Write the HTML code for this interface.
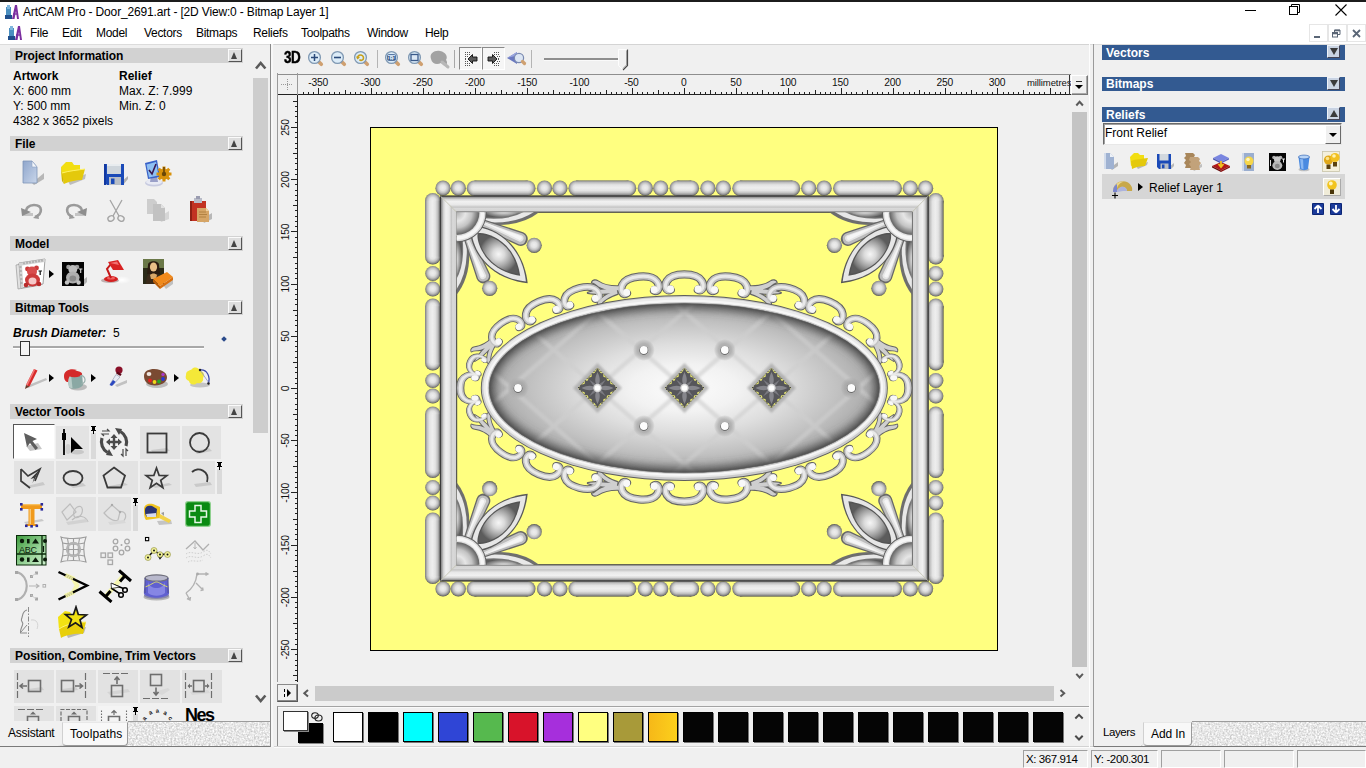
<!DOCTYPE html>
<html lang="en"><head><meta charset="utf-8"><title>ArtCAM Pro - Door_2691.art</title>
<style>
*{box-sizing:border-box;margin:0;padding:0}
html,body{width:1366px;height:768px;overflow:hidden;background:#f0f0f0;font-family:"Liberation Sans",sans-serif;font-size:12px;color:#000}
.a{position:absolute}
.t{position:absolute;white-space:nowrap;line-height:1}
.hd{position:absolute;left:10px;width:233px;height:14.4px;background:#d2d2d2}
.hd b{position:absolute;left:5px;top:1.5px;font-size:12px;line-height:12px;white-space:nowrap;letter-spacing:-0.1px}
.hb{position:absolute;left:218px;top:.5px;width:13.5px;height:13.5px;background:#dedede;border:1px solid;border-color:#fafafa #555 #555 #fafafa}
.hb i{position:absolute;left:2px;top:2px;width:0;height:0;border:3.5px solid transparent;border-top:0;border-bottom:7px solid #444}
.bh{position:absolute;left:1102px;width:242.5px;height:14.3px;background:#335a91}
.bh b{position:absolute;left:4px;top:1px;font-size:12px;line-height:12px;color:#fff;white-space:nowrap}
.bb{position:absolute;left:225px;top:0;width:13px;height:13px;background:#c9d3e2;border:1px solid;border-color:#eef2f8 #445 #445 #eef2f8}
.bb i{position:absolute;left:1.5px;top:2px;width:0;height:0;border:4px solid transparent}
.bb i.d{border-bottom:0;border-top:7px solid #3a3a3a}
.bb i.u{border-top:0;border-bottom:7px solid #3a3a3a}
.sw{position:absolute;top:712px;width:30px;height:30px;border:1px solid #000;box-shadow:1px 1px 0 #777}
.tex{background-color:#cdcdcd;background-image:radial-gradient(circle at 1px 1px,#e2e2e2 0.8px,transparent 1.2px),radial-gradient(circle at 3px 2px,#b4b4b4 0.8px,transparent 1.2px),radial-gradient(circle at 2px 4px,#dadada 0.7px,transparent 1.1px);background-size:5px 4px,7px 5px,6px 7px}</style></head>
<body>
<div class="a" style="left:0;top:0;width:1366px;height:44px;background:#fff"></div>
<div class="a" style="left:0;top:0;width:1366px;height:2px;background:#1c1c1c"></div>
<svg class="a" style="left:5px;top:5px" width="14" height="15" viewBox="0 0 14 15"><rect x="1" y="2" width="5" height="9" fill="#4a8fc0"/><rect x="0" y="10" width="7" height="4" fill="#1f4e8c"/><rect x="2" y="0" width="3" height="4" fill="#7fb6dd"/><path d="M7 14 L10 0 L12 0 L14 14 L12 14 L11 6 L9.5 14 Z" fill="#7b2fa0"/><path d="M8 9 h5" stroke="#7b2fa0" stroke-width="1.3"/></svg>
<svg class="a" style="left:8px;top:26px" width="14" height="15" viewBox="0 0 14 15"><rect x="1" y="2" width="5" height="9" fill="#4a8fc0"/><rect x="0" y="10" width="7" height="4" fill="#1f4e8c"/><rect x="2" y="0" width="3" height="4" fill="#7fb6dd"/><path d="M7 14 L10 0 L12 0 L14 14 L12 14 L11 6 L9.5 14 Z" fill="#7b2fa0"/><path d="M8 9 h5" stroke="#7b2fa0" stroke-width="1.3"/></svg>
<div class="t" style="left:23px;top:6px;font-size:12px;letter-spacing:-0.16px">ArtCAM Pro - Door_2691.art - [2D View:0 - Bitmap Layer 1]</div>
<div class="a" style="left:1245px;top:10px;width:11px;height:1px;background:#000"></div>
<svg class="a" style="left:1289px;top:4px" width="12" height="12" viewBox="0 0 12 12" fill="none" stroke="#000" stroke-width="1"><rect x="0.5" y="2.5" width="8" height="8"/><path d="M2.5 2.5 v-2 h8 v8 h-2"/></svg>
<svg class="a" style="left:1335px;top:4px" width="12" height="12" viewBox="0 0 12 12" stroke="#000" stroke-width="1.1"><path d="M0.5 0.5 L11.5 11.5 M11.5 0.5 L0.5 11.5"/></svg>
<div class="a" style="left:1309px;top:24px;width:18.500px;height:18px;border:1px solid #e6e6e6;background:#fff"></div>
<div class="a" style="left:1328px;top:24px;width:18.500px;height:18px;border:1px solid #e6e6e6;background:#fff"></div>
<div class="a" style="left:1347px;top:24px;width:18.500px;height:18px;border:1px solid #e6e6e6;background:#fff"></div>
<div class="a" style="left:1314px;top:36px;width:6px;height:2px;background:#5a6676"></div>
<svg class="a" style="left:1332px;top:29px" width="9" height="9" viewBox="0 0 9 9" fill="none" stroke="#5a6676" stroke-width="1"><rect x="0.5" y="3.5" width="5" height="4.5"/><path d="M0.5 4.5 h5" stroke-width="1.6"/><path d="M2.5 3 v-2 h5.5 v4.5 h-2"/><path d="M2.5 1.5 h5.5" stroke-width="1.6"/></svg>
<svg class="a" style="left:1352px;top:29px" width="9" height="9" viewBox="0 0 9 9" stroke="#5a6676" stroke-width="1.8"><path d="M1 1 L8 8 M8 1 L1 8"/></svg>
<div class="t" style="left:30px;top:27px;font-size:12px;letter-spacing:-0.3px">File</div>
<div class="t" style="left:62px;top:27px;font-size:12px;letter-spacing:-0.3px">Edit</div>
<div class="t" style="left:96px;top:27px;font-size:12px;letter-spacing:-0.3px">Model</div>
<div class="t" style="left:144px;top:27px;font-size:12px;letter-spacing:-0.3px">Vectors</div>
<div class="t" style="left:196px;top:27px;font-size:12px;letter-spacing:-0.3px">Bitmaps</div>
<div class="t" style="left:253px;top:27px;font-size:12px;letter-spacing:-0.3px">Reliefs</div>
<div class="t" style="left:301px;top:27px;font-size:12px;letter-spacing:-0.3px">Toolpaths</div>
<div class="t" style="left:367px;top:27px;font-size:12px;letter-spacing:-0.3px">Window</div>
<div class="t" style="left:425px;top:27px;font-size:12px;letter-spacing:-0.3px">Help</div>
<div class="a" style="left:0;top:44px;width:1366px;height:1px;background:#dcdcdc"></div>
<div class="a" style="left:270px;top:44px;width:1px;height:703px;background:#8a8a8a"></div>
<div class="a" style="left:271px;top:44px;width:2px;height:703px;background:#f7f7f7"></div>
<div class="a" style="left:253px;top:78px;width:15px;height:355px;background:#cdcdcd"></div>
<svg class="a" style="left:254px;top:59px" width="14" height="12" viewBox="0 0 14 12" fill="none" stroke="#5a5a5a" stroke-width="2.6"><path d="M2 9.500 L6.700 4 L11.400 9.500"/></svg>
<svg class="a" style="left:254px;top:693px" width="14" height="12" viewBox="0 0 14 12" fill="none" stroke="#5a5a5a" stroke-width="2.6"><path d="M2 2.500 L6.700 8 L11.400 2.500"/></svg>
<div class="hd" style="top:48px;height:15px"><b>Project Information</b><div class="hb"><i></i></div></div>
<div class="hd" style="top:136.3px"><b>File</b><div class="hb"><i></i></div></div>
<div class="hd" style="top:236.4px"><b>Model</b><div class="hb"><i></i></div></div>
<div class="hd" style="top:300.3px"><b>Bitmap Tools</b><div class="hb"><i></i></div></div>
<div class="hd" style="top:404.4px"><b>Vector Tools</b><div class="hb"><i></i></div></div>
<div class="hd" style="top:648.2px"><b>Position, Combine, Trim Vectors</b><div class="hb"><i></i></div></div>
<div class="t" style="left:13px;top:70px;font-weight:bold">Artwork</div>
<div class="t" style="left:119px;top:70px;font-weight:bold">Relief</div>
<div class="t" style="left:13px;top:85px">X: 600 mm</div>
<div class="t" style="left:119px;top:85px">Max. Z: 7.999</div>
<div class="t" style="left:13px;top:100px">Y: 500 mm</div>
<div class="t" style="left:119px;top:100px">Min. Z: 0</div>
<div class="t" style="left:13px;top:115px">4382 x 3652 pixels</div>
<div class="t" style="left:13px;top:327px;font-weight:bold;font-style:italic;font-size:12px">Brush Diameter:</div>
<div class="t" style="left:113px;top:327px;font-size:12px">5</div>
<div class="a" style="left:222px;top:337px;width:4px;height:4px;background:#2a4a8a;transform:rotate(45deg)"></div>
<div class="a" style="left:13px;top:346px;width:191px;height:3px;background:#a8a8a8;border-bottom:1px solid #fff"></div>
<div class="a" style="left:20px;top:341px;width:10px;height:15px;background:#f4f4f4;border:1px solid #333"></div>
<svg class="a" style="left:20px;top:159px" width="26" height="28" viewBox="0 0 26 28" ><defs><linearGradient id="gd1" x1="0" y1="0" x2="1" y2="1"><stop offset="0" stop-color="#8fa6cc"/><stop offset="1" stop-color="#c9d6ea"/></linearGradient></defs>
<path d="M12 24 L24 14 L24 20 L14 26Z" fill="#a9a9a9" opacity=".8"/><path d="M3 2 H12 L17 8 V24 H3Z" fill="url(#gd1)" stroke="#7f95b8" stroke-width=".8"/><path d="M12 2 L17 8 H12Z" fill="#f4f7fb" stroke="#8ea2c4" stroke-width=".6"/></svg>
<svg class="a" style="left:58px;top:159px" width="30" height="28" viewBox="0 0 30 28" ><path d="M10 22 L28 15 L27 20 L12 26Z" fill="#b0b0b0" opacity=".8"/><path d="M3 8 L8 3 L14 3 L16 6 L22 6 L22 13 L4 22Z" fill="#f2de12"/><path d="M4 14 C10 12 20 11 27 10 L24 21 C18 21 10 23 6 25 Z" fill="#e4c90c"/><path d="M4 14 C10 12 20 11 27 10" stroke="#fff36a" stroke-width="1" fill="none"/><path d="M3 8 L4 22 L6 25 L4 14Z" fill="#cdb308"/></svg>
<svg class="a" style="left:101px;top:160px" width="28" height="28" viewBox="0 0 28 28" ><path d="M20 22 L27 16 L27 19 L22 25Z" fill="#b0b0b0"/><path d="M3 4 H23 V25 H6 L3 22Z" fill="#1a4ab8"/><rect x="6" y="4" width="14" height="10" fill="#cfd6dc"/><rect x="6" y="4" width="14" height="2" fill="#e8ecef"/><rect x="8" y="17" width="12" height="8" fill="#b8bec6"/><rect x="10" y="18.5" width="3.5" height="5.5" fill="#1a4ab8"/><path d="M3 4 H5 V25 H3Z" fill="#1238a0"/></svg>
<svg class="a" style="left:142px;top:158px" width="32" height="30" viewBox="0 0 32 30" ><ellipse cx="12" cy="25" rx="9" ry="3.4" fill="#c8cbe0"/><ellipse cx="12" cy="24" rx="8" ry="2.8" fill="#e8eaf4"/><path d="M9 18 L15 18 L16 24 L8 24Z" fill="#9aa0c8"/><path d="M3 5 L15 2 L18 19 L6 21Z" fill="#3a62c8"/><path d="M4.5 6.5 L14 4 L16.5 17.5 L7 19.5Z" fill="#8fc0f2"/><path d="M7 12 L10 16 L14 6" stroke="#3a1850" stroke-width="1.6" fill="none"/><circle cx="22" cy="16" r="5.5" fill="#d8920c"/><g stroke="#d8920c" stroke-width="3"><path d="M22 8.5 V23.5 M14.5 16 H29.5 M16.7 10.7 L27.3 21.3 M27.3 10.7 L16.7 21.3"/></g><circle cx="22" cy="16" r="2.2" fill="#6a4808"/><path d="M22 9 V14" stroke="#5a3a06" stroke-width="1.4"/></svg>
<svg class="a" style="left:19px;top:200px" width="28" height="20" viewBox="0 0 28 20" ><path d="M3 13 H14 V16 H3Z" fill="#c4c4c4"/><path d="M16 17 C24 14 24 5 15 5 C9 5 7 9 7 11" stroke="#9a9a9a" stroke-width="2.6" fill="none"/><path d="M2 8 L12 12 L3 16Z" fill="#8e8e8e"/><path d="M14 18 L19 14 L20 19Z" fill="#9a9a9a"/></svg>
<svg class="a" style="left:61px;top:200px" width="28" height="20" viewBox="0 0 28 20" ><path d="M14 13 H25 V16 H14Z" fill="#c4c4c4"/><path d="M12 17 C4 14 4 5 13 5 C19 5 21 9 21 11" stroke="#9a9a9a" stroke-width="2.6" fill="none"/><path d="M26 8 L16 12 L25 16Z" fill="#8e8e8e"/><path d="M14 18 L9 14 L8 19Z" fill="#9a9a9a"/></svg>
<svg class="a" style="left:104px;top:198px" width="24" height="26" viewBox="0 0 24 26" ><g stroke="#a4a4a4" stroke-width="1.3" fill="none"><path d="M6 2 L15 18 M18 2 L9 18"/><ellipse cx="7" cy="20.5" rx="3.2" ry="2.6" transform="rotate(-25 7 20.5)"/><ellipse cx="17" cy="20.5" rx="3.2" ry="2.6" transform="rotate(25 17 20.5)"/></g></svg>
<svg class="a" style="left:145px;top:197px" width="26" height="26" viewBox="0 0 26 26" ><path d="M14 20 L24 14 V22 L16 25Z" fill="#d6d6d6"/><path d="M2 2 H9 L12 5 V17 H2Z" fill="#cdcdcd"/><path d="M8 7 H16 L20 11 V24 H8Z" fill="#c2c2c2"/><path d="M16 7 L20 11 H16Z" fill="#e2e2e2"/></svg>
<svg class="a" style="left:188px;top:195px" width="26" height="29" viewBox="0 0 26 29" ><path d="M14 24 L24 18 V24 L16 28Z" fill="#b8b8b8"/><path d="M2 6 H18 V26 H2Z" fill="#c23222"/><path d="M2 6 H4 V26 H2Z" fill="#8e2014"/><path d="M6 3 H14 V8 H6Z" fill="#b9bcc8"/><rect x="8" y="1" width="4" height="3" fill="#9a9cb0"/><path d="M9 13 H18 L21 16 V27 H9Z" fill="#d6a566"/><path d="M18 13 L21 16 H18Z" fill="#f0d2a0"/><path d="M11 17 h7 M11 19.5 h8 M11 22 h7" stroke="#a87838" stroke-width=".8"/></svg>
<svg class="a" style="left:13px;top:257px" width="34" height="34" viewBox="0 0 34 34" ><path d="M3 8 L30 3 L28 28 L5 32Z" fill="#e2e2e2" stroke="#9a9a9a" stroke-width=".7"/><path d="M6 6 L32 2 L30 27 L8 31Z" fill="#fff" stroke="#8a8a8a" stroke-width=".8"/><path d="M6 6 L32 2 L31.7 5 L9 8.6 L10.5 30.6 L8 31Z" fill="#d4d4d4"/><g stroke="#666" stroke-width=".6"><path d="M11 5.3v2M14 4.8v2M17 4.4v2M20 3.9v2M23 3.5v2M26 3v2M29 2.6v2M6.5 10h2M6.8 14h2M7 18h2M7.3 22h2M7.6 26h2"/></g><circle cx="14.5" cy="12" r="2.4" fill="#cc3a3a"/><circle cx="23.5" cy="11" r="2.4" fill="#cc3a3a"/><circle cx="19" cy="14.5" r="5" fill="#d84c4c"/><ellipse cx="19.5" cy="23" rx="7.5" ry="6.5" fill="#cc3a3a"/><ellipse cx="19.5" cy="24" rx="4" ry="3.6" fill="#f6c8c8"/><circle cx="13" cy="28" r="2.3" fill="#b82c2c"/><circle cx="26" cy="27" r="2.3" fill="#b82c2c"/><path d="M25.5 14 h3.5 M27.2 14 v4" stroke="#111" stroke-width="1.2"/></svg>
<div class="a" style="left:49px;top:270px;width:0;height:0;border:4px solid transparent;border-right:0;border-left:5px solid #000"></div>
<svg class="a" style="left:60px;top:260px" width="28" height="28" viewBox="0 0 28 28" ><path d="M20 22 L27 17 V22 L23 26Z" fill="#b4b4b4"/><rect x="2" y="2" width="22" height="24" fill="#050505"/><circle cx="8.5" cy="7" r="2.3" fill="#a0a0a0"/><circle cx="17" cy="7" r="2.3" fill="#a0a0a0"/><circle cx="12.8" cy="9.5" r="4.4" fill="#bdbdbd"/><ellipse cx="12.8" cy="17.5" rx="6.8" ry="6" fill="#b0b0b0"/><ellipse cx="12.8" cy="18.5" rx="3.4" ry="3" fill="#8a8a8a"/><circle cx="7" cy="22.5" r="2.2" fill="#c4c4c4"/><circle cx="18.6" cy="22.5" r="2.2" fill="#c4c4c4"/><path d="M19 9 h3.4 M20.7 9 v4" stroke="#e0e0e0" stroke-width="1.1"/></svg>
<svg class="a" style="left:98px;top:258px" width="34" height="28" viewBox="0 0 34 28" ><defs><radialGradient id="glw"><stop offset="0" stop-color="#fff"/><stop offset="1" stop-color="#fff" stop-opacity="0"/></radialGradient></defs><ellipse cx="24" cy="22" rx="9" ry="4" fill="url(#glw)"/><ellipse cx="12" cy="22.5" rx="9" ry="2.6" fill="#c0b0b0"/><ellipse cx="13" cy="21" rx="7" ry="3" fill="#d42020"/><ellipse cx="13" cy="20" rx="4" ry="1.6" fill="#f06060"/><path d="M13 20 L9 11 L13 6" stroke="#c41818" stroke-width="2" fill="none"/><path d="M10 4 L20 2 L26 12 L15 12Z" fill="#d82222"/><path d="M12 5 L19 3.6 L21 7Z" fill="#f27070"/></svg>
<svg class="a" style="left:141px;top:257px" width="34" height="34" viewBox="0 0 34 34" ><path d="M22 28 L32 22 V27 L25 32Z" fill="#c0c0c0"/><rect x="2" y="2" width="21" height="25" fill="#2a2a18"/><rect x="2" y="2" width="21" height="9" fill="#6a7848"/><path d="M5 27 C5 18 8 16 12.5 16 C17 16 20 18 20 27Z" fill="#3a2a1a"/><path d="M7 8 C7 3 18 3 18 8 L19 17 L6 17Z" fill="#2a1c10"/><ellipse cx="12.5" cy="10" rx="3.6" ry="4.6" fill="#e8c088"/><path d="M9 18 C11 16 14 16 16 18 L15 22 L10 22Z" fill="#d8a868"/><path d="M12 22 L26 15 L32 20 L19 29Z" fill="#f08a1c"/><path d="M12 22 L19 29 L19 32 L12 25Z" fill="#b85c08"/><path d="M19 29 L32 20 V23 L19 32Z" fill="#d87010"/></svg>
<svg class="a" style="left:20px;top:366px" width="30" height="24" viewBox="0 0 30 24" ><path d="M6 20 L26 12 L27 14 L8 22Z" fill="#c0c0c0"/><path d="M6 19 L14 3 L17.5 4.5 L9.5 20.5Z" fill="#d82a2a"/><path d="M14 3 L15.3 3.5 L7.5 19.8 L6 19Z" fill="#f07878"/><path d="M6 19 L9.5 20.5 L5 23Z" fill="#6a3a2a"/></svg>
<div class="a" style="left:49px;top:374px;width:0;height:0;border:4px solid transparent;border-right:0;border-left:5px solid #000"></div>
<svg class="a" style="left:61px;top:366px" width="28" height="26" viewBox="0 0 28 26" ><ellipse cx="17" cy="21" rx="9" ry="3.4" fill="#bcbcbc"/><path d="M6 9 L21 7 L22 19 C20 23 10 24 8 21Z" fill="#8aa8a4"/><path d="M6 9 L10 8.5 L11.5 22 C9.5 22 8.5 21.5 8 21Z" fill="#b8ccc8"/><ellipse cx="13.5" cy="8" rx="7.6" ry="3.2" fill="#d42a2a"/><path d="M3 10 C3 4 10 2 16 4 C12 6 8 8 7 16 C5 16 3 14 3 10Z" fill="#d42a2a"/><path d="M19 10 C25 8 26 18 20 18" stroke="#9ab0ac" stroke-width="1.2" fill="none"/></svg>
<div class="a" style="left:91px;top:374px;width:0;height:0;border:4px solid transparent;border-right:0;border-left:5px solid #000"></div>
<svg class="a" style="left:105px;top:365px" width="26" height="24" viewBox="0 0 26 24" ><path d="M10 20 L22 15 L22 18 L12 22Z" fill="#c2c2c2"/><circle cx="14" cy="5" r="3.6" fill="#8a1028"/><rect x="11.5" y="7.5" width="5" height="2.4" fill="#5a0818" transform="rotate(30 14 8.5)"/><path d="M11 9.5 L15 12 L8 20 L5.5 18.5Z" fill="#e8ecf4" stroke="#8890a8" stroke-width=".6"/><path d="M8 15 L10.6 16.8 L7 21 L4.5 20Z" fill="#2c48c0"/></svg>
<svg class="a" style="left:142px;top:366px" width="28" height="24" viewBox="0 0 28 24" ><ellipse cx="15" cy="18" rx="11" ry="4" fill="#bdbdbd"/><path d="M2 10 C2 3 12 2 18 4 C25 6 27 12 23 16 C20 19 14 20 9 19 C5 18 2 15 2 10Z" fill="#7a4a32"/><ellipse cx="7" cy="8" rx="2.4" ry="2" fill="#efe6e0"/><circle cx="8" cy="14.5" r="1.9" fill="#e82020"/><circle cx="12.5" cy="16" r="1.9" fill="#f0d818"/><circle cx="17" cy="15.5" r="1.9" fill="#28a828"/><circle cx="21" cy="13" r="1.9" fill="#2838d8"/><circle cx="21" cy="8.5" r="1.7" fill="#a838c8"/></svg>
<div class="a" style="left:174px;top:374px;width:0;height:0;border:4px solid transparent;border-right:0;border-left:5px solid #000"></div>
<svg class="a" style="left:183px;top:365px" width="30" height="24" viewBox="0 0 30 24" ><ellipse cx="17" cy="20" rx="10" ry="2.6" fill="#c4c4c4"/><path d="M3 10 C3 5 7 6 9 4 C12 1 16 3 17 6 C21 6 22 10 20 13 C21 17 17 19 14 18 C11 21 6 19 6 16 C3 15 2 13 3 10Z" fill="#f4e838"/><path d="M17 5 C24 4 28 12 25 19" stroke="#3a48a8" stroke-width="1.3" fill="none"/><path d="M17 5 L26 18" stroke="#8a90c8" stroke-width=".8"/><circle cx="17" cy="5" r="1.2" fill="#222"/><circle cx="25.5" cy="18.5" r="1.2" fill="#222"/></svg>
<div class="a" style="left:13px;top:424px;width:42px;height:35px;background:#fff;border:1px solid;border-color:#555 #f8f8f8 #f8f8f8 #555"></div>
<svg class="a" style="left:20px;top:430px" width="28" height="24" viewBox="0 0 28 24" ><path d="M6 16 L18 13 L22 19 L10 21Z" fill="#c6c6c6"/><path d="M4 3 L17 9 L12.5 11 L18 18 L15.5 20 L10 13 L7 17Z" fill="#5e5e5e"/></svg>
<div class="a" style="left:56px;top:425.5px;width:33px;height:33.5px;background:#e3e3e3"></div>
<svg class="a" style="left:57px;top:427px" width="32" height="32" viewBox="0 0 32 32" ><ellipse cx="20" cy="25" rx="7" ry="2.4" fill="#c8c8c8"/><ellipse cx="11" cy="22" rx="2.6" ry="5" fill="#cfcfcf"/><path d="M7 2 V28" stroke="#000" stroke-width="1.8"/><rect x="5" y="6" width="4" height="7" fill="#000"/><path d="M14 10 L14 26 L18 22 L26 22Z" fill="#000"/></svg>
<div class="a" style="left:91px;top:433px;width:5px;height:26px;background:#dadada"></div><svg class="a" style="left:90px;top:425px" width="7" height="9" viewBox="0 0 7 9" ><path d="M1 1 h5 v1 h-1 v3 h1 v1 h-5 v-1 h1 v-3 h-1z M3 6 h1 v3 h-1z" fill="#000"/></svg>
<svg class="a" style="left:98px;top:426px" width="32" height="32" viewBox="0 0 32 32" ><g fill="none" stroke="#4a4a4a" stroke-width="3.2"><path d="M22.5 5.5 A12.5 12.5 0 0 1 28 20"/><path d="M9.5 26.5 A12.5 12.5 0 0 1 4 12"/></g><path d="M17 2 L24 3 L21 9Z M15 30 L8 29 L11 23Z" fill="#4a4a4a"/><g fill="#4a4a4a"><path d="M16 8 L19.5 12 H17.2 V14.8 H20 V12.5 L24 16 L20 19.5 V17.2 H17.2 V20 H19.5 L16 24 L12.5 20 H14.8 V17.2 H12 V19.5 L8 16 L12 12.500 V14.8 H14.8 V12 H12.5Z"/><path d="M4 5 h7 l-2 -2 M11 8 h-7 l2 2" stroke="#4a4a4a" stroke-width="1.2" fill="none"/><path d="M25 23 v7 l-2 -2 M28 30 v-7 l2 2" stroke="#4a4a4a" stroke-width="1.2" fill="none"/></g></svg>
<div class="a" style="left:140px;top:425.5px;width:39.5px;height:33.5px;background:#e3e3e3"></div>
<div class="a" style="left:182px;top:425.5px;width:39.3px;height:33.5px;background:#e3e3e3"></div>
<svg class="a" style="left:143px;top:429px" width="30" height="28" viewBox="0 0 30 28" ><path d="M8 21 L24 19 L27 22 L10 24Z" fill="#c9c9c9"/><rect x="4.5" y="4.500" width="19" height="19" fill="none" stroke="#3a3a3a" stroke-width="1.8"/></svg>
<svg class="a" style="left:185px;top:429px" width="30" height="28" viewBox="0 0 30 28" ><path d="M10 22 L24 19 L27 22 L12 25Z" fill="#c9c9c9"/><circle cx="14.5" cy="13.5" r="9.5" fill="none" stroke="#3a3a3a" stroke-width="1.8"/></svg>
<div class="a" style="left:14px;top:461px;width:40px;height:33px;background:#e3e3e3"></div>
<div class="a" style="left:56px;top:461px;width:40px;height:33px;background:#e3e3e3"></div>
<div class="a" style="left:98px;top:461px;width:40px;height:33px;background:#e3e3e3"></div>
<div class="a" style="left:140px;top:461px;width:40px;height:33px;background:#e3e3e3"></div>
<div class="a" style="left:182px;top:461px;width:33px;height:33px;background:#e3e3e3"></div>
<div class="a" style="left:217px;top:469px;width:5px;height:25px;background:#dadada"></div><svg class="a" style="left:216px;top:461px" width="7" height="9" viewBox="0 0 7 9" ><path d="M1 1 h5 v1 h-1 v3 h1 v1 h-5 v-1 h1 v-3 h-1z M3 6 h1 v3 h-1z" fill="#000"/></svg>
<svg class="a" style="left:17px;top:464px" width="32" height="28" viewBox="0 0 32 28" ><path d="M10 22 L26 18 L28 21 L12 24Z" fill="#c9c9c9"/><path d="M4 5 L11 12 L23 5 L18 17 M4 5 L4 17 L13 24" fill="none" stroke="#3a3a3a" stroke-width="1.7"/><path d="M23 5 L15.500 19 L17 14 L13.500 15Z" fill="#3a3a3a"/></svg>
<svg class="a" style="left:59px;top:464px" width="32" height="28" viewBox="0 0 32 28" ><path d="M10 21 L24 19 L27 22 L14 24Z" fill="#c9c9c9"/><ellipse cx="14" cy="14" rx="9.5" ry="7" fill="none" stroke="#3a3a3a" stroke-width="1.8"/></svg>
<svg class="a" style="left:99px;top:464px" width="36" height="28" viewBox="0 0 36 28" ><path d="M10 22 L26 19 L29 21 L12 24Z" fill="#c9c9c9"/><path d="M15 3.500 L26 11.500 L22 23.500 H8.500 L4.500 11.500Z" fill="none" stroke="#3a3a3a" stroke-width="1.8"/></svg>
<svg class="a" style="left:143px;top:464px" width="34" height="30" viewBox="0 0 34 30" ><path d="M10 22 L26 19 L29 21 L12 24Z" fill="#c9c9c9"/><path d="M13.500 4 L16.100 11.400 L23.900 11.600 L17.700 16.300 L19.900 23.800 L13.500 19.400 L7.100 23.800 L9.300 16.300 L3.100 11.600 L10.900 11.400Z" fill="none" stroke="#3a3a3a" stroke-width="1.7"/></svg>
<svg class="a" style="left:186px;top:464px" width="30" height="28" viewBox="0 0 30 28" ><path d="M8 20 L24 18 L26 21 L10 23Z" fill="#c9c9c9"/><path d="M6 8 C12 2 24 7 21 18" fill="none" stroke="#3a3a3a" stroke-width="1.8"/></svg>
<svg class="a" style="left:18px;top:501px" width="30" height="28" viewBox="0 0 30 28" ><path d="M6 21 L24 18 L26 20 L8 23Z" fill="#c9c9c9"/><path d="M3 3 H24 V8 H16.500 V23 H19 V25 H8 V23 H10.500 V8 H3Z" fill="#f09a1c"/><path d="M11.500 8 H13 V23 H11.500Z" fill="#f8c878"/><path d="M3 3 H24 V4.300 H3Z" fill="#f8c060"/><g fill="#2a2a9a"><rect x="2" y="2" width="2.600" height="2.600"/><rect x="22.500" y="2" width="2.600" height="2.600"/><rect x="2" y="7" width="2.600" height="2.600"/><rect x="22.500" y="7" width="2.600" height="2.600"/><rect x="7" y="23.500" width="2.600" height="2.600"/><rect x="17.500" y="23.500" width="2.600" height="2.600"/><rect x="12.300" y="24" width="2.600" height="2.600"/></g></svg>
<div class="a" style="left:56px;top:497px;width:40px;height:34px;background:#e3e3e3"></div>
<div class="a" style="left:98px;top:497px;width:33px;height:34px;background:#e3e3e3"></div>
<div class="a" style="left:133px;top:505px;width:5px;height:26px;background:#dadada"></div><svg class="a" style="left:132px;top:497px" width="7" height="9" viewBox="0 0 7 9" ><path d="M1 1 h5 v1 h-1 v3 h1 v1 h-5 v-1 h1 v-3 h-1z M3 6 h1 v3 h-1z" fill="#000"/></svg>
<svg class="a" style="left:58px;top:500px" width="36" height="28" viewBox="0 0 36 28" ><g fill="none" stroke="#bdbdbd" stroke-width="1.2"><path d="M4 12 L12 4 L18 12 L9 20Z"/><ellipse cx="20" cy="12" rx="4" ry="6" transform="rotate(25 20 12)"/><path d="M14 20 C20 14 28 16 30 22"/></g><path d="M8 22 L28 19 L30 22 L10 25Z" fill="#d2d2d2"/></svg>
<svg class="a" style="left:100px;top:500px" width="32" height="28" viewBox="0 0 32 28" ><g fill="none" stroke="#bdbdbd" stroke-width="1.2"><path d="M4 13 L12 5 L20 12 L18 20 C14 22 10 20 4 13Z"/><path d="M20 12 C26 10 28 18 22 22"/></g><circle cx="12" cy="5" r="1.200" fill="#aaa"/><circle cx="20" cy="12" r="1.200" fill="#aaa"/><path d="M8 22 L24 20 L26 23 L10 25Z" fill="#d8d8d8"/></svg>
<svg class="a" style="left:141px;top:501px" width="34" height="28" viewBox="0 0 34 28" ><path d="M16 20 L30 19 L31 23 L18 24Z" fill="#c4c4c4"/><path d="M3 8 C3 3 8 2 12 3 L19 6 L19 17 L5 19 C3 17 3 12 3 8Z" fill="#f0c422"/><path d="M4 9 C4 5 8 4 11 5 L16 8 L15 16 L6 16 C4 14 4 12 4 9Z" fill="#2a3474"/><path d="M5 13 L15 12 L15 16 L6 16Z" fill="#d8dcf0"/><path d="M19 13 L30 19 L28 22 L18 17Z" fill="#f2d24a"/><path d="M20 12 l3 -1 v4Z" fill="#9a9a9a"/></svg>
<svg class="a" style="left:184px;top:500px" width="30" height="28" viewBox="0 0 30 28" ><rect x="1" y="1" width="26" height="26" rx="3" fill="#8fd08f"/><rect x="2.200" y="2.200" width="23.600" height="23.600" rx="2" fill="#0a8a12"/><path d="M11 5.500 H17 V11 H22.500 V17 H17 V22.500 H11 V17 H5.500 V11 H11Z" fill="none" stroke="#e8f8e8" stroke-width="1.500"/></svg>
<svg class="a" style="left:16px;top:535px" width="31" height="31" viewBox="0 0 31 31" ><defs><linearGradient id="gab" x1="0" y1="0" x2="1" y2="1"><stop offset="0" stop-color="#3c9a3c"/><stop offset=".6" stop-color="#9ad49a"/><stop offset="1" stop-color="#d0f0d0"/></linearGradient></defs><rect x=".5" y=".5" width="29.500" height="29.500" fill="url(#gab)" stroke="#0a2a0a"/><path d="M1 19 H30 M26 1 V30" stroke="#0a2a0a" stroke-width="1.300"/><circle cx="6" cy="6" r="2.200" fill="#0a1a0a"/><rect x="11" y="4" width="2.600" height="4.400" fill="#0a1a0a"/><path d="M16 8.400 L19.500 3.600 L23 8.400Z" fill="#0a1a0a"/><text x="3" y="17.500" font-size="9" font-family="Liberation Sans,sans-serif" fill="#0a1a0a" style="letter-spacing:-.3px">ABC</text><circle cx="6" cy="24.500" r="2.200" fill="#0a1a0a"/><rect x="11" y="22.500" width="2.600" height="4.400" fill="#0a1a0a"/><path d="M16 27 L19.500 22.200 L23 27Z" fill="#0a1a0a"/><circle cx="29" cy="6" r="2" fill="#0a1a0a"/><circle cx="29" cy="24.500" r="2" fill="#0a1a0a"/><path d="M27.500 11 v6" stroke="#0a1a0a" stroke-width="1.200"/></svg>
<svg class="a" style="left:59px;top:535px" width="30" height="30" viewBox="0 0 30 30" ><g fill="none" stroke="#9c9c9c" stroke-width="1.100"><path d="M2 2 C8 4 20 4 27 2 C24 10 24 18 27 27 C20 25 8 25 2 27 C5 18 5 10 2 2Z"/><path d="M3.500 8 C10 9.500 18 9.500 25.500 8 M4 14.500 H25 M3.500 21 C10 19.500 18 19.500 25.500 21 M8.500 3.500 C10 10 10 19 8.500 25.500 M14.500 3.800 V25.200 M20.500 3.500 C19 10 19 19 20.500 25.500"/><circle cx="14.500" cy="14.500" r="6.500" stroke-width="2.400" stroke="#b4b4b4"/></g></svg>
<svg class="a" style="left:99px;top:537px" width="32" height="30" viewBox="0 0 32 30" ><g fill="none" stroke="#a8a8a8" stroke-width="1.300"><rect x="2" y="16" width="4.500" height="4.500"/><rect x="9" y="16" width="4.500" height="4.500"/><rect x="9" y="23" width="4.500" height="4.500"/><circle cx="16.500" cy="4.500" r="2.300"/><circle cx="16.500" cy="11.500" r="2.300"/><circle cx="22.500" cy="15.500" r="2.300"/><circle cx="28" cy="4.500" r="2.300"/><circle cx="28.500" cy="11.500" r="2.300"/></g><circle cx="22.500" cy="8" r="1" fill="#a8a8a8"/></svg>
<svg class="a" style="left:143px;top:536px" width="30" height="26" viewBox="0 0 30 26" ><rect x="2.500" y="1.500" width="3.200" height="3.200" fill="#fff" stroke="#000" stroke-width="1.100"/><path d="M5 21 L11 14.500 L17 18.500 L24.500 18" stroke="#111" stroke-width="1.600" fill="none"/><path d="M15 19 L17 22.500 L20 18.500" stroke="#111" stroke-width="1.500" fill="none"/><g fill="#f2f29a" stroke="#8a8a3a" stroke-width=".6"><circle cx="5" cy="21.500" r="3"/><circle cx="11" cy="14.500" r="3"/><circle cx="17" cy="18.500" r="2.800"/><circle cx="24.500" cy="18.500" r="3"/></g><g fill="#111"><circle cx="5" cy="21.500" r="1"/><circle cx="11" cy="14.500" r="1"/><circle cx="17" cy="18.500" r="1"/><circle cx="24.500" cy="18.500" r="1"/></g></svg>
<svg class="a" style="left:183px;top:538px" width="30" height="28" viewBox="0 0 30 28" ><path d="M3 11 L12 3 L20 12 L26 6" stroke="#b0b0b0" stroke-width="1.300" fill="none"/><path d="M12 5 v6 l-1.500 -2 M12 11 l1.500 -2" stroke="#b8b8b8" stroke-width="1" fill="none"/><g stroke="#cfcfcf" stroke-width="1" fill="none" stroke-dasharray="1.500 1.500"><path d="M3 16 C8 12 14 18 20 14 S26 14 28 16 M3 20 C8 16 14 22 20 18 S26 18 28 20 M5 24 C9 21 14 25 20 22"/></g></svg>
<svg class="a" style="left:14px;top:570px" width="34" height="32" viewBox="0 0 34 32" ><path d="M3 2 C16 6 16 26 3 30" stroke="#b0b0b0" stroke-width="2.200" fill="none"/><g fill="#a6a6a6"><rect x="1" y="1" width="3" height="3"/><rect x="1" y="28" width="3" height="3"/><rect x="21" y="1.500" width="3" height="3"/><rect x="21" y="27.500" width="3" height="3"/><rect x="16" y="5" width="3" height="3"/><rect x="16" y="24" width="3" height="3"/></g><rect x="29" y="14.500" width="2.600" height="2.600" fill="none" stroke="#b0b0b0"/><path d="M15 16 H25 M22 14 L25 16 L22 18" stroke="#b4b4b4" stroke-width="1.100" fill="none"/><path d="M17 7 L22 3 M17 25 L22 29" stroke="#c4c4c4" stroke-width=".9"/></svg>
<svg class="a" style="left:56px;top:569px" width="34" height="34" viewBox="0 0 34 34" ><path d="M9 6 L17 9.500 L21 16.500 L17 23.500 L9 27" stroke="#f6f6a8" stroke-width="4.500" fill="none" opacity=".9"/><path d="M2.500 3 L31 16.500 L2.500 30.500" stroke="#000" stroke-width="2.400" fill="none"/><path d="M9.500 6.300 L17 9.900 M9.500 27 L17 23.400" stroke="#f6f6a8" stroke-width="2.600"/><path d="M9.500 6.300 L17 9.900 M9.500 27 L17 23.400" stroke="#555" stroke-width=".7" stroke-dasharray="1 1.200"/></svg>
<svg class="a" style="left:98px;top:569px" width="34" height="34" viewBox="0 0 34 34" ><path d="M8 27 L26 6" stroke="#f6f6b0" stroke-width="4.500"/><path d="M1.500 22.500 L13.500 33 M7.500 27.800 L12.500 22" stroke="#000" stroke-width="3"/><path d="M21 1.500 L33 12 M27 6.800 L22 12.500" stroke="#000" stroke-width="3"/><g fill="none" stroke="#000" stroke-width="1.500"><circle cx="27" cy="21" r="2.300"/><circle cx="23" cy="26" r="2.300"/><path d="M25.500 19.500 L14 15 M21.500 24.500 L13 19"/></g><path d="M13 14 L22 18 L13.500 19.500Z" fill="#fff" stroke="#000" stroke-width=".7"/></svg>
<svg class="a" style="left:141px;top:572px" width="32" height="30" viewBox="0 0 32 30" ><ellipse cx="15.500" cy="25" rx="13" ry="3.600" fill="#b6b6b6"/><ellipse cx="15.500" cy="23.500" rx="12.500" ry="3.400" fill="#8a8aa8"/><path d="M4 6 C4 14 2.500 18 3 22 C8 27 23 27 28 22 C28.500 18 27 14 27 6Z" fill="#6060d0"/><path d="M7 10 C9 18 22 18 24 10 L24 21 C20 24.500 11 24.500 7 21Z" fill="#9090e8" opacity=".8"/><ellipse cx="15.500" cy="6" rx="11.500" ry="3.200" fill="#b8b8cc" stroke="#70707c" stroke-width="1.200"/><path d="M4 15 C10 13 13 10 15.500 10 C18 10 21 13 27 15" stroke="#d8d870" stroke-width="1" fill="none"/><path d="M4 6 V21 M27 6 V21" stroke="#50508a" stroke-width="1"/></svg>
<svg class="a" style="left:183px;top:571px" width="30" height="32" viewBox="0 0 30 32" ><g stroke="#b2b2b2" stroke-width="1.400" fill="none"><path d="M14 3 C13 12 9 18 3 22"/><path d="M15 3 H25 M22.500 1.500 L25 3 L22.500 4.500"/><path d="M13 12 L20 19 M17.500 19.500 L20 19 L19.500 16.500"/><path d="M3 22 L7 29 M4 27.500 L7 29 L7.500 26"/></g><circle cx="14.500" cy="3" r="1.400" fill="#aaa"/></svg>
<svg class="a" style="left:17px;top:606px" width="28" height="32" viewBox="0 0 28 32" ><path d="M11.500 1 V31" stroke="#8c8c8c" stroke-width="1" stroke-dasharray="5 1.500 1.500 1.500"/><path d="M10 4 C5 5 6 10 4.500 13 C3.500 16 7 16 5.500 19 C4.500 22 3 24 3.500 27 H10" stroke="#8c8c8c" stroke-width="1.100" fill="none"/><path d="M4 26 L10 19" stroke="#8c8c8c" stroke-width="1"/><path d="M14 14 C20 13 22 18 20 23" stroke="#d4d4d4" stroke-width="1" fill="none"/></svg>
<svg class="a" style="left:56px;top:605px" width="34" height="34" viewBox="0 0 34 34" ><path d="M10 28 L30 22 L28 28 L12 33Z" fill="#b8b8b8"/><path d="M2 12 L9 6 L14 7 L17 12 L17 24 L3 25Z" fill="#f2e212"/><path d="M3 24 C10 19 22 17 30 17 L27 29 C20 28 10 30 5 33Z" fill="#e8cf0a"/><path d="M3 24 C10 19 22 17 30 17" stroke="#fff478" stroke-width="1" fill="none"/><path d="M20 2 L22.300 9.500 L30.500 10 L24 14.800 L26 22.500 L19.500 17.800 L12.800 22 L15.500 14.500 L9.500 9.500 L17.500 9.500Z" fill="#f2e212" stroke="#1a1a1a" stroke-width="1.700" stroke-linejoin="miter"/></svg>
<div class="a" style="left:14px;top:670px;width:40px;height:33px;background:#e2e2e2"></div>
<div class="a" style="left:56px;top:670px;width:40px;height:33px;background:#e2e2e2"></div>
<div class="a" style="left:98px;top:670px;width:40px;height:33px;background:#e2e2e2"></div>
<div class="a" style="left:140px;top:670px;width:40px;height:33px;background:#e2e2e2"></div>
<div class="a" style="left:182px;top:670px;width:40px;height:33px;background:#e2e2e2"></div>
<svg class="a" style="left:14px;top:670px" width="40" height="33" viewBox="0 0 40 33" ><path d="M3.500 3 V30" stroke="#6e6e6e" stroke-width="1.200" stroke-dasharray="7 2"/><path d="M14 19 L28 17 L30 20 L16 22Z" fill="#cfcfcf"/><rect x="14.500" y="10.500" width="12" height="11" fill="none" stroke="#6e6e6e" stroke-width="1.600"/><path d="M13 16 H6.500 M9 13.500 L6 16 L9 18.500" stroke="#6e6e6e" stroke-width="1.600" fill="none"/></svg>
<svg class="a" style="left:56px;top:670px" width="40" height="33" viewBox="0 0 40 33" ><path d="M29.500 3 V30" stroke="#6e6e6e" stroke-width="1.200" stroke-dasharray="7 2"/><path d="M6 19 L20 17 L22 20 L8 22Z" fill="#cfcfcf"/><rect x="5.500" y="10.500" width="12" height="11" fill="none" stroke="#6e6e6e" stroke-width="1.600"/><path d="M19 16 H26 M23.500 13.500 L26.500 16 L23.500 18.500" stroke="#6e6e6e" stroke-width="1.600" fill="none"/></svg>
<svg class="a" style="left:98px;top:670px" width="40" height="33" viewBox="0 0 40 33" ><path d="M5 3.500 H31" stroke="#6e6e6e" stroke-width="1.200" stroke-dasharray="7 2"/><path d="M9 22 L30 19 L32 22 L12 25Z" fill="#d4d4d4"/><rect x="13.500" y="15.500" width="11" height="11" fill="none" stroke="#6e6e6e" stroke-width="1.600"/><path d="M19 14 V7.500 M16.500 10 L19 7 L21.500 10" stroke="#6e6e6e" stroke-width="1.600" fill="none"/></svg>
<svg class="a" style="left:140px;top:670px" width="40" height="33" viewBox="0 0 40 33" ><path d="M3 28.500 H29" stroke="#6e6e6e" stroke-width="1.200" stroke-dasharray="7 2"/><path d="M14 22 L28 18 L30 20 L22 25Z" fill="#d8d8d8"/><rect x="10.500" y="4.500" width="11" height="11" fill="none" stroke="#6e6e6e" stroke-width="1.600"/><path d="M16 17.500 V24.500 M13.500 22 L16 25 L18.500 22" stroke="#6e6e6e" stroke-width="1.600" fill="none"/></svg>
<svg class="a" style="left:182px;top:670px" width="40" height="33" viewBox="0 0 40 33" ><path d="M3.500 3 V30 M29.500 3 V30" stroke="#6e6e6e" stroke-width="1.200" stroke-dasharray="7 2"/><path d="M8 22 L26 20 L28 23 L10 25Z" fill="#d8d8d8"/><rect x="11.500" y="10.500" width="10.500" height="11" fill="none" stroke="#6e6e6e" stroke-width="1.600"/><path d="M5.500 16 L8 13.500 V18.500Z M27.500 16 L25 13.500 V18.500Z" fill="#6e6e6e"/><path d="M8 16 H10 M23 16 H25" stroke="#6e6e6e" stroke-width="1.400"/></svg>
<div class="a" style="left:14px;top:706px;width:40px;height:15px;background:#e2e2e2"></div>
<div class="a" style="left:56px;top:706px;width:40px;height:15px;background:#e2e2e2"></div>
<div class="a" style="left:98px;top:706px;width:33px;height:15px;background:#f4f4f4"></div>
<div class="a" style="left:133px;top:706px;width:5px;height:15px;overflow:hidden"></div><div class="a" style="left:133px;top:714px;width:5px;height:7px;background:#dadada"></div><svg class="a" style="left:132px;top:706px" width="7" height="9" viewBox="0 0 7 9" ><path d="M1 1 h5 v1 h-1 v3 h1 v1 h-5 v-1 h1 v-3 h-1z M3 6 h1 v3 h-1z" fill="#000"/></svg>
<svg class="a" style="left:14px;top:706px" width="40" height="15" viewBox="0 0 40 15" ><path d="M4 3.500 H30" stroke="#6e6e6e" stroke-width="1.200" stroke-dasharray="7 2"/><path d="M19 5.500 L16 8.500 H22Z" fill="#6e6e6e"/><path d="M13.500 15 V10.500 H24.500 V15" fill="none" stroke="#6e6e6e" stroke-width="1.600"/></svg>
<svg class="a" style="left:56px;top:706px" width="40" height="15" viewBox="0 0 40 15" ><path d="M5 15 V3.500 H31 V15" stroke="#6e6e6e" stroke-width="1.200" stroke-dasharray="4 1.500" fill="none"/><path d="M18 5.500 L15 8.500 H21Z" fill="#6e6e6e"/><path d="M12.500 15 V10.500 H23.500 V15" fill="none" stroke="#6e6e6e" stroke-width="1.600"/></svg>
<svg class="a" style="left:98px;top:706px" width="40" height="15" viewBox="0 0 40 15" ><path d="M3.500 15 V3 M28.500 15 V3" stroke="#6e6e6e" stroke-width="1.100" stroke-dasharray="1.500 1.500"/><path d="M16 5 V9 M13.500 7 L16 4.500 L18.500 7" stroke="#6e6e6e" stroke-width="1.200" fill="none"/><path d="M10.500 15 V10.500 H21.500 V15" fill="none" stroke="#6e6e6e" stroke-width="1.600"/></svg>
<svg class="a" style="left:141px;top:706px" width="34" height="15" viewBox="0 0 34 15" ><g font-family="Liberation Sans,sans-serif" font-size="6" font-weight="bold" fill="#111"><text transform="translate(4 15) rotate(-55)">a</text><text transform="translate(9 9) rotate(-30)">a</text><text transform="translate(15 7) rotate(-10)">a</text><text transform="translate(22 8) rotate(25)">a</text><text transform="translate(27 12) rotate(55)">c</text></g></svg>
<div class="a" style="left:185px;top:705px;width:30px;height:16px;overflow:hidden"><div class="t" style="left:0;top:1px;font-size:18px;font-weight:bold;letter-spacing:-1.500px">Nes</div></div>
<svg class="a" style="left:0;top:722px" width="270" height="24"><defs><filter id="noise" x="0" y="0" width="100%" height="100%"><feTurbulence type="fractalNoise" baseFrequency="0.55" numOctaves="2" seed="3"/><feColorMatrix values="0.75 0 0 0 0.42  0.75 0 0 0 0.42  0.75 0 0 0 0.42  0 0 0 0 1"/></filter></defs><rect width="270" height="24" fill="#cfcfcf" filter="url(#noise)"/></svg><div class="a" style="left:128px;top:721px;width:142px;height:1px;background:#9c9c9c"></div>
<div class="a" style="left:0;top:746px;width:270px;height:1px;background:#7a7a7a"></div>
<div class="a" style="left:0;top:721px;width:63px;height:25px;background:#f0f0f0;border-radius:0 0 5px 0"></div>
<div class="a" style="left:62px;top:722px;width:66px;height:24px;background:#f8f8f8;border:1px solid #9a9a9a;border-top:1px solid #e8e8e8;border-left:1px solid #d0d0d0;border-radius:0 0 4px 4px"></div>
<div class="t" style="left:8px;top:727px;font-size:12px;letter-spacing:-0.25px">Assistant</div>
<div class="t" style="left:70px;top:728px;font-size:12px;letter-spacing:0.1px">Toolpaths</div>
<div class="a" style="left:274px;top:44px;width:815px;height:1px;background:#d4d4d4"></div>
<div class="t" style="left:284px;top:50px;font-size:16px;font-weight:bold;letter-spacing:-0.6px;-webkit-text-stroke:0.45px #000;transform:scaleX(0.84);transform-origin:0 0">3D</div>
<svg class="a" style="left:305px;top:48px" width="22" height="22" viewBox="0 0 22 22" ><path d="M14 14 L16.300 16.300" stroke="#cfa070" stroke-width="3.600" stroke-linecap="round"/><circle cx="9.500" cy="9.500" r="5.900" fill="#dcecf8" stroke="#7f98b2" stroke-width="1.300"/><path d="M6 9.500 H13 M9.500 6 V13" stroke="#2a4a7a" stroke-width="1.500"/></svg>
<svg class="a" style="left:328px;top:48px" width="22" height="22" viewBox="0 0 22 22" ><path d="M14 14 L16.300 16.300" stroke="#cfa070" stroke-width="3.600" stroke-linecap="round"/><circle cx="9.500" cy="9.500" r="5.900" fill="#dcecf8" stroke="#7f98b2" stroke-width="1.300"/><path d="M6 9.500 H13" stroke="#2a4a7a" stroke-width="1.600"/></svg>
<svg class="a" style="left:351px;top:48px" width="22" height="22" viewBox="0 0 22 22" ><path d="M14 14 L16.300 16.300" stroke="#cfa070" stroke-width="3.600" stroke-linecap="round"/><circle cx="9.500" cy="9.500" r="5.900" fill="#dcecf8" stroke="#7f98b2" stroke-width="1.300"/><path d="M6.500 10.500 C6.500 6 12.500 6 12.500 10 C12.500 12.500 9.500 13 8.500 11.500" stroke="#c8a018" stroke-width="1.600" fill="none"/><path d="M5 8.500 L6.600 11.500 L9 9Z" fill="#c8a018"/></svg>
<div class="a" style="left:377px;top:50px;width:1px;height:18px;background:#b4b4b4"></div>
<svg class="a" style="left:382px;top:48px" width="22" height="22" viewBox="0 0 22 22" ><path d="M14 14 L16.300 16.300" stroke="#cfa070" stroke-width="3.600" stroke-linecap="round"/><circle cx="9.500" cy="9.500" r="5.900" fill="#dcecf8" stroke="#7f98b2" stroke-width="1.300"/><rect x="5.500" y="6.500" width="8" height="6" rx="1" fill="#c8dcf0" stroke="#4a6a98" stroke-width=".9"/><text x="9.500" y="11.600" font-size="5.500" text-anchor="middle" font-family="Liberation Sans,sans-serif" font-weight="bold" fill="#1a3a6a">1:1</text></svg>
<svg class="a" style="left:405px;top:48px" width="22" height="22" viewBox="0 0 22 22" ><path d="M14 14 L16.300 16.300" stroke="#cfa070" stroke-width="3.600" stroke-linecap="round"/><circle cx="9.500" cy="9.500" r="5.900" fill="#dcecf8" stroke="#7f98b2" stroke-width="1.300"/><rect x="6" y="6.500" width="7" height="6" fill="#dce8f4" stroke="#3a5a8a" stroke-width="1.300"/></svg>
<svg class="a" style="left:427px;top:48px" width="24" height="22" viewBox="0 0 24 22" ><path d="M4 11 C2 5 8 2 13 3 C19 4 21 9 19 12 C21 14 20 18 17 17.500 L14 15 C10 17 5 16 4 11Z" fill="#a2a2a2"/><path d="M15 14 L21 19" stroke="#b8b8b8" stroke-width="3" stroke-linecap="round"/></svg>
<div class="a" style="left:454px;top:50px;width:1px;height:18px;background:#a8a8a8"></div>
<div class="a" style="left:459px;top:47px;width:23px;height:23px;background:#f6f6f6;border:1px solid;border-color:#8a8a8a #fff #fff #8a8a8a"></div>
<div class="a" style="left:482px;top:47px;width:23px;height:23px;background:#f6f6f6;border:1px solid;border-color:#8a8a8a #fff #fff #8a8a8a"></div>
<svg class="a" style="left:462px;top:50px" width="18" height="18" viewBox="0 0 18 18" ><g stroke="#555" stroke-width="1" stroke-dasharray="1 1"><path d="M3 2.500 H9 M3 4.500 H9 M3 6.500 H6 M3 11.500 H6 M3 13.500 H9 M3 15.500 H9 M3 8.500 H5 M3 9.500 H5"/></g><path d="M6 9 L10.500 4.500 V7 H15 V11 H10.500 V13.500Z" fill="#5a5a5a" stroke="#111" stroke-width=".9"/></svg>
<svg class="a" style="left:485px;top:50px" width="18" height="18" viewBox="0 0 18 18" ><g stroke="#555" stroke-width="1" stroke-dasharray="1 1"><path d="M9 2.500 H15 M9 4.500 H15 M12 6.500 H15 M12 11.500 H15 M9 13.500 H15 M9 15.500 H15 M13 8.500 H15 M13 9.500 H15"/></g><path d="M12 9 L7.500 4.500 V7 H3 V11 H7.500 V13.500Z" fill="#5a5a5a" stroke="#111" stroke-width=".9"/></svg>
<svg class="a" style="left:505px;top:49px" width="24" height="20" viewBox="0 0 24 20" ><path d="M2 9 L12 3 L12 15Z" fill="#6a78c0"/><path d="M2 9 L12 3 L12 6.500Z" fill="#9aa6e0"/><circle cx="14" cy="9" r="4.600" fill="#dce6f4" stroke="#7a8ab0" stroke-width="1.200"/><path d="M17.500 12.500 L19.500 14.500" stroke="#cfa070" stroke-width="3.200" stroke-linecap="round"/></svg>
<div class="a" style="left:531px;top:50px;width:1px;height:18px;background:#b4b4b4"></div>
<div class="a" style="left:544px;top:58px;width:74px;height:2px;background:#8e8e8e;border-bottom:1px solid #fafafa;box-sizing:content-box"></div>
<svg class="a" style="left:618px;top:49px" width="11" height="22" viewBox="0 0 11 22" ><path d="M.5 .5 H9.500 V16.500 L5 21 L.5 16.500Z" fill="#f1f1f1" stroke="#fdfdfd" stroke-width="1"/><path d="M9.500 .5 V16.500 L5 21" fill="none" stroke="#4a4a4a" stroke-width="1.200"/><path d="M8.500 1.500 V16 L5 19.500" fill="none" stroke="#a0a0a0" stroke-width="1"/></svg>
<svg class="a" style="left:277px;top:73px" width="794" height="22" viewBox="277 73 794 22" shape-rendering="crispEdges"><rect x="277" y="73" width="794" height="22" fill="#f0f0f0"/><path d="M277 74.5 H1071" stroke="#8e8e8e"/><path d="M277 94.5 H1071" stroke="#222"/><path d="M297.5 73 V95" stroke="#9a9a9a"/><path d="M277.5 73 V95" stroke="#9a9a9a"/><path d="M281 84.5 H293 M287.5 79 V91" stroke="#999" stroke-dasharray="1 1"/><path d="M303.5 92 V94 M308.5 92 V94 M313.5 92 V94 M318.5 88 V94 M324.5 92 V94 M329.5 92 V94 M334.5 92 V94 M339.5 92 V94 M345.5 90 V94 M350.5 92 V94 M355.5 92 V94 M360.5 92 V94 M365.5 92 V94 M371.5 88 V94 M376.5 92 V94 M381.5 92 V94 M386.5 92 V94 M392.5 92 V94 M397.5 90 V94 M402.5 92 V94 M407.5 92 V94 M412.5 92 V94 M418.5 92 V94 M423.5 88 V94 M428.5 92 V94 M433.5 92 V94 M439.5 92 V94 M444.5 92 V94 M449.5 90 V94 M454.5 92 V94 M459.5 92 V94 M465.5 92 V94 M470.5 92 V94 M475.5 88 V94 M480.5 92 V94 M486.5 92 V94 M491.5 92 V94 M496.5 92 V94 M501.5 90 V94 M506.5 92 V94 M512.5 92 V94 M517.5 92 V94 M522.5 92 V94 M527.5 88 V94 M533.5 92 V94 M538.5 92 V94 M543.5 92 V94 M548.5 92 V94 M553.5 90 V94 M559.5 92 V94 M564.5 92 V94 M569.5 92 V94 M574.5 92 V94 M580.5 88 V94 M585.5 92 V94 M590.5 92 V94 M595.5 92 V94 M600.5 92 V94 M606.5 90 V94 M611.5 92 V94 M616.5 92 V94 M621.5 92 V94 M627.5 92 V94 M632.5 88 V94 M637.5 92 V94 M642.5 92 V94 M647.5 92 V94 M653.5 92 V94 M658.5 90 V94 M663.5 92 V94 M668.5 92 V94 M674.5 92 V94 M679.5 92 V94 M684.5 88 V94 M689.5 92 V94 M694.5 92 V94 M700.5 92 V94 M705.5 92 V94 M710.5 90 V94 M715.5 92 V94 M721.5 92 V94 M726.5 92 V94 M731.5 92 V94 M736.5 88 V94 M741.5 92 V94 M747.5 92 V94 M752.5 92 V94 M757.5 92 V94 M762.5 90 V94 M768.5 92 V94 M773.5 92 V94 M778.5 92 V94 M783.5 92 V94 M788.5 88 V94 M794.5 92 V94 M799.5 92 V94 M804.5 92 V94 M809.5 92 V94 M815.5 90 V94 M820.5 92 V94 M825.5 92 V94 M830.5 92 V94 M835.5 92 V94 M841.5 88 V94 M846.5 92 V94 M851.5 92 V94 M856.5 92 V94 M862.5 92 V94 M867.5 90 V94 M872.5 92 V94 M877.5 92 V94 M882.5 92 V94 M888.5 92 V94 M893.5 88 V94 M898.5 92 V94 M903.5 92 V94 M909.5 92 V94 M914.5 92 V94 M919.5 90 V94 M924.5 92 V94 M929.5 92 V94 M935.5 92 V94 M940.5 92 V94 M945.5 88 V94 M950.5 92 V94 M956.5 92 V94 M961.5 92 V94 M966.5 92 V94 M971.5 90 V94 M976.5 92 V94 M982.5 92 V94 M987.5 92 V94 M992.5 92 V94 M997.5 88 V94 M1003.5 92 V94 M1008.5 92 V94 M1013.5 92 V94 M1018.5 92 V94 M1023.5 90 V94 M1029.5 92 V94 M1034.5 92 V94 M1039.5 92 V94 M1044.5 92 V94 M1050.5 88 V94 M1055.5 92 V94 M1060.5 92 V94 M1065.5 92 V94" stroke="#222"/><text x="318.2" y="85.8" font-size="10.3" text-anchor="middle" font-family="Liberation Sans,sans-serif" fill="#111" style="letter-spacing:-0.2px">-350</text><text x="370.4" y="85.8" font-size="10.3" text-anchor="middle" font-family="Liberation Sans,sans-serif" fill="#111" style="letter-spacing:-0.2px">-300</text><text x="422.6" y="85.8" font-size="10.3" text-anchor="middle" font-family="Liberation Sans,sans-serif" fill="#111" style="letter-spacing:-0.2px">-250</text><text x="474.8" y="85.8" font-size="10.3" text-anchor="middle" font-family="Liberation Sans,sans-serif" fill="#111" style="letter-spacing:-0.2px">-200</text><text x="527.1" y="85.8" font-size="10.3" text-anchor="middle" font-family="Liberation Sans,sans-serif" fill="#111" style="letter-spacing:-0.2px">-150</text><text x="579.3" y="85.8" font-size="10.3" text-anchor="middle" font-family="Liberation Sans,sans-serif" fill="#111" style="letter-spacing:-0.2px">-100</text><text x="631.5" y="85.8" font-size="10.3" text-anchor="middle" font-family="Liberation Sans,sans-serif" fill="#111" style="letter-spacing:-0.2px">-50</text><text x="683.7" y="85.8" font-size="10.3" text-anchor="middle" font-family="Liberation Sans,sans-serif" fill="#111" style="letter-spacing:-0.2px">0</text><text x="735.9" y="85.8" font-size="10.3" text-anchor="middle" font-family="Liberation Sans,sans-serif" fill="#111" style="letter-spacing:-0.2px">50</text><text x="788.1" y="85.8" font-size="10.3" text-anchor="middle" font-family="Liberation Sans,sans-serif" fill="#111" style="letter-spacing:-0.2px">100</text><text x="840.3" y="85.8" font-size="10.3" text-anchor="middle" font-family="Liberation Sans,sans-serif" fill="#111" style="letter-spacing:-0.2px">150</text><text x="892.6" y="85.8" font-size="10.3" text-anchor="middle" font-family="Liberation Sans,sans-serif" fill="#111" style="letter-spacing:-0.2px">200</text><text x="944.8" y="85.8" font-size="10.3" text-anchor="middle" font-family="Liberation Sans,sans-serif" fill="#111" style="letter-spacing:-0.2px">250</text><text x="997.0" y="85.8" font-size="10.3" text-anchor="middle" font-family="Liberation Sans,sans-serif" fill="#111" style="letter-spacing:-0.2px">300</text><text x="1027" y="85.5" font-size="9.5" font-family="Liberation Sans,sans-serif" fill="#111" style="letter-spacing:-0.1px">millimetres</text></svg>
<svg class="a" style="left:277px;top:95px" width="22" height="587" viewBox="277 95 22 587" shape-rendering="crispEdges"><rect x="277" y="95" width="22" height="587" fill="#f0f0f0"/><path d="M297.5 95 V682" stroke="#222"/><path d="M277.5 95 V682" stroke="#9a9a9a"/><path d="M295 680.5 H297 M293 675.5 H297 M295 670.5 H297 M295 665.5 H297 M295 660.5 H297 M295 654.5 H297 M291 649.5 H297 M295 644.5 H297 M295 639.5 H297 M295 633.5 H297 M295 628.5 H297 M293 623.5 H297 M295 618.5 H297 M295 613.5 H297 M295 607.5 H297 M295 602.5 H297 M291 597.5 H297 M295 592.5 H297 M295 586.5 H297 M295 581.5 H297 M295 576.5 H297 M293 571.5 H297 M295 566.5 H297 M295 560.5 H297 M295 555.5 H297 M295 550.5 H297 M291 545.5 H297 M295 539.5 H297 M295 534.5 H297 M295 529.5 H297 M295 524.5 H297 M293 519.5 H297 M295 513.5 H297 M295 508.5 H297 M295 503.5 H297 M295 498.5 H297 M291 492.5 H297 M295 487.5 H297 M295 482.5 H297 M295 477.5 H297 M295 472.5 H297 M293 466.5 H297 M295 461.5 H297 M295 456.5 H297 M295 451.5 H297 M295 445.5 H297 M291 440.5 H297 M295 435.5 H297 M295 430.5 H297 M295 425.5 H297 M295 419.5 H297 M293 414.5 H297 M295 409.5 H297 M295 404.5 H297 M295 398.5 H297 M295 393.5 H297 M291 388.5 H297 M295 383.5 H297 M295 378.5 H297 M295 372.5 H297 M295 367.5 H297 M293 362.5 H297 M295 357.5 H297 M295 351.5 H297 M295 346.5 H297 M295 341.5 H297 M291 336.5 H297 M295 331.5 H297 M295 325.5 H297 M295 320.5 H297 M295 315.5 H297 M293 310.5 H297 M295 304.5 H297 M295 299.5 H297 M295 294.5 H297 M295 289.5 H297 M291 284.5 H297 M295 278.5 H297 M295 273.5 H297 M295 268.5 H297 M295 263.5 H297 M293 257.5 H297 M295 252.5 H297 M295 247.5 H297 M295 242.5 H297 M295 237.5 H297 M291 231.5 H297 M295 226.5 H297 M295 221.5 H297 M295 216.5 H297 M295 210.5 H297 M293 205.5 H297 M295 200.5 H297 M295 195.5 H297 M295 190.5 H297 M295 184.5 H297 M291 179.5 H297 M295 174.5 H297 M295 169.5 H297 M295 163.5 H297 M295 158.5 H297 M293 153.5 H297 M295 148.5 H297 M295 143.5 H297 M295 137.5 H297 M295 132.5 H297 M291 127.5 H297 M295 122.5 H297 M295 116.5 H297 M295 111.5 H297 M295 106.5 H297 M293 101.5 H297" stroke="#222"/><text transform="translate(288.7 649.6) rotate(-90)" font-size="10.3" text-anchor="middle" font-family="Liberation Sans,sans-serif" fill="#111" style="letter-spacing:-0.2px">-250</text><text transform="translate(288.7 597.4) rotate(-90)" font-size="10.3" text-anchor="middle" font-family="Liberation Sans,sans-serif" fill="#111" style="letter-spacing:-0.2px">-200</text><text transform="translate(288.7 545.1) rotate(-90)" font-size="10.3" text-anchor="middle" font-family="Liberation Sans,sans-serif" fill="#111" style="letter-spacing:-0.2px">-150</text><text transform="translate(288.7 492.9) rotate(-90)" font-size="10.3" text-anchor="middle" font-family="Liberation Sans,sans-serif" fill="#111" style="letter-spacing:-0.2px">-100</text><text transform="translate(288.7 440.7) rotate(-90)" font-size="10.3" text-anchor="middle" font-family="Liberation Sans,sans-serif" fill="#111" style="letter-spacing:-0.2px">-50</text><text transform="translate(288.7 388.5) rotate(-90)" font-size="10.3" text-anchor="middle" font-family="Liberation Sans,sans-serif" fill="#111" style="letter-spacing:-0.2px">0</text><text transform="translate(288.7 336.3) rotate(-90)" font-size="10.3" text-anchor="middle" font-family="Liberation Sans,sans-serif" fill="#111" style="letter-spacing:-0.2px">50</text><text transform="translate(288.7 284.1) rotate(-90)" font-size="10.3" text-anchor="middle" font-family="Liberation Sans,sans-serif" fill="#111" style="letter-spacing:-0.2px">100</text><text transform="translate(288.7 231.9) rotate(-90)" font-size="10.3" text-anchor="middle" font-family="Liberation Sans,sans-serif" fill="#111" style="letter-spacing:-0.2px">150</text><text transform="translate(288.7 179.6) rotate(-90)" font-size="10.3" text-anchor="middle" font-family="Liberation Sans,sans-serif" fill="#111" style="letter-spacing:-0.2px">200</text><text transform="translate(288.7 127.4) rotate(-90)" font-size="10.3" text-anchor="middle" font-family="Liberation Sans,sans-serif" fill="#111" style="letter-spacing:-0.2px">250</text></svg>
<div class="a" style="left:1069px;top:75px;width:1px;height:20px;background:#333"></div>
<div class="a" style="left:1071px;top:75px;width:17px;height:20px;background:#f0f0f0;border:1px solid;border-color:#fff #777 #777 #fff;box-shadow:inset -1px -1px 0 #a8a8a8"></div>
<div class="a" style="left:1075px;top:85px;width:0;height:0;border:4px solid transparent;border-bottom:0;border-top:4px solid #000"></div>
<div class="a" style="left:1076px;top:81px;width:6px;height:1px;background:#000;opacity:.8"></div>
<div class="a" style="left:298px;top:95px;width:773px;height:587px;background:#f0f0f0"></div>
<svg class="a" style="left:299px;top:95px" width="772" height="587" viewBox="299 95 772 587">
<defs>
<radialGradient id="bead" cx="49%" cy="47%" r="53%"><stop offset="0" stop-color="#eeeeee"/><stop offset=".35" stop-color="#e3e3e3"/><stop offset=".62" stop-color="#c2c2c2"/><stop offset=".84" stop-color="#909090"/><stop offset=".95" stop-color="#686868"/><stop offset="1" stop-color="#484848"/></radialGradient>
<linearGradient id="reelH" x1="0" y1="0" x2="0" y2="1"><stop offset="0" stop-color="#6a6a6a"/><stop offset=".03" stop-color="#8c8c8c"/><stop offset=".141" stop-color="#c2c2c2"/><stop offset=".2845" stop-color="#e3e3e3"/><stop offset=".47" stop-color="#eeeeee"/><stop offset=".6555" stop-color="#e3e3e3"/><stop offset=".7986" stop-color="#c2c2c2"/><stop offset=".9152" stop-color="#909090"/><stop offset=".9735" stop-color="#686868"/><stop offset="1" stop-color="#484848"/></linearGradient>
<linearGradient id="reelV" x1="0" y1="0" x2="1" y2="0"><stop offset="0" stop-color="#6a6a6a"/><stop offset=".03" stop-color="#8c8c8c"/><stop offset=".141" stop-color="#c2c2c2"/><stop offset=".2845" stop-color="#e3e3e3"/><stop offset=".47" stop-color="#eeeeee"/><stop offset=".6555" stop-color="#e3e3e3"/><stop offset=".7986" stop-color="#c2c2c2"/><stop offset=".9152" stop-color="#909090"/><stop offset=".9735" stop-color="#686868"/><stop offset="1" stop-color="#484848"/></linearGradient>
<linearGradient id="frT" x1="0" y1="0" x2="0" y2="1"><stop offset="0" stop-color="#444"/><stop offset=".06" stop-color="#8c8c8c"/><stop offset=".2" stop-color="#d6d6d6"/><stop offset=".34" stop-color="#f1f1f1"/><stop offset=".54" stop-color="#e8e8e8"/><stop offset=".69" stop-color="#c4c4c4"/><stop offset=".75" stop-color="#d9d9d9"/><stop offset=".93" stop-color="#d3d3d3"/><stop offset="1" stop-color="#505050"/></linearGradient>
<linearGradient id="frB" x1="0" y1="1" x2="0" y2="0"><stop offset="0" stop-color="#444"/><stop offset=".06" stop-color="#8c8c8c"/><stop offset=".2" stop-color="#d6d6d6"/><stop offset=".34" stop-color="#f1f1f1"/><stop offset=".54" stop-color="#e8e8e8"/><stop offset=".69" stop-color="#c4c4c4"/><stop offset=".75" stop-color="#d9d9d9"/><stop offset=".93" stop-color="#d3d3d3"/><stop offset="1" stop-color="#505050"/></linearGradient>
<linearGradient id="frL" x1="0" y1="0" x2="1" y2="0"><stop offset="0" stop-color="#444"/><stop offset=".06" stop-color="#8c8c8c"/><stop offset=".2" stop-color="#d6d6d6"/><stop offset=".34" stop-color="#f1f1f1"/><stop offset=".54" stop-color="#e8e8e8"/><stop offset=".69" stop-color="#c4c4c4"/><stop offset=".75" stop-color="#d9d9d9"/><stop offset=".93" stop-color="#d3d3d3"/><stop offset="1" stop-color="#505050"/></linearGradient>
<linearGradient id="frR" x1="1" y1="0" x2="0" y2="0"><stop offset="0" stop-color="#444"/><stop offset=".06" stop-color="#8c8c8c"/><stop offset=".2" stop-color="#d6d6d6"/><stop offset=".34" stop-color="#f1f1f1"/><stop offset=".54" stop-color="#e8e8e8"/><stop offset=".69" stop-color="#c4c4c4"/><stop offset=".75" stop-color="#d9d9d9"/><stop offset=".93" stop-color="#d3d3d3"/><stop offset="1" stop-color="#505050"/></linearGradient>
<radialGradient id="dome" cx="50%" cy="50%" r="50%"><stop offset="0" stop-color="#fcfcfc"/><stop offset=".28" stop-color="#f2f2f2"/><stop offset=".52" stop-color="#dedede"/><stop offset=".78" stop-color="#c2c2c2"/><stop offset="1" stop-color="#a6a6a6"/></radialGradient><filter id="b5" x="-10%" y="-20%" width="120%" height="140%"><feGaussianBlur stdDeviation="5"/></filter>
<radialGradient id="halo" cx="50%" cy="50%" r="50%"><stop offset="0" stop-color="#9a9a9a" stop-opacity=".85"/><stop offset=".6" stop-color="#a4a4a4" stop-opacity=".7"/><stop offset=".85" stop-color="#aaaaaa" stop-opacity=".35"/><stop offset="1" stop-color="#b0b0b0" stop-opacity="0"/></radialGradient>
<radialGradient id="leaf" cx="50%" cy="50%" r="50%"><stop offset="0" stop-color="#f6f6f6"/><stop offset=".3" stop-color="#dadada"/><stop offset=".62" stop-color="#a6a6a6"/><stop offset=".88" stop-color="#787878"/><stop offset="1" stop-color="#5c5c5c"/></radialGradient>
<radialGradient id="dish" cx="0" cy="0" r="22" gradientUnits="userSpaceOnUse"><stop offset="0" stop-color="#b0b0b0"/><stop offset=".4" stop-color="#e6e6e6"/><stop offset=".7" stop-color="#c4c4c4"/><stop offset="1" stop-color="#6a6a6a"/></radialGradient>
<filter id="b1" x="-5%" y="-5%" width="110%" height="110%"><feGaussianBlur stdDeviation="1.1"/></filter>
<filter id="b2" x="-20%" y="-20%" width="140%" height="140%"><feGaussianBlur stdDeviation="0.6"/></filter>
<clipPath id="ovc"><ellipse cx="684.3" cy="388.0" rx="195" ry="84.5"/></clipPath>
<clipPath id="q1"><rect x="0" y="0" width="100" height="100"/></clipPath>
<g id="arch"><path d="M-13.6 -4.2 C-18 -1.5 -20.5 -8 -17.4 -13 C-14 -18.6 -7 -19.6 0 -19.6 C7 -19.6 14 -18.6 17.4 -13 C20.5 -8 18 -1.5 13.6 -4.2"/></g>
<g id="curl"><circle cx="-13.8" cy="-5" r="3.4"/><circle cx="13.8" cy="-5" r="3.4"/></g>
<g id="sprigD"><path d="M-16 -12 C-8 -13 0 -16 5 -21 C7 -23 10 -23 11 -21 C8 -20 7 -17 3 -14 C-2 -10.5 -8 -9 -16 -8Z M-12 -10 C-2 -12 8 -13 17 -11.5 C10 -8.5 0 -7 -12 -7Z M-12 -8 C-4 -8 4 -5 9 0 C10 2 9 4 7 3 C4 -1 -4 -4 -12 -5Z"/></g>
<g id="corner" clip-path="url(#q1)">
 <!-- half leaves along edges -->
 <path d="M24 -8 L86 -3 Q64 17 26 11.5 Z" fill="#6e6e6e"/>
 <path d="M24 -8 L81 -3 Q61 13 26 9.5 Z" fill="#e8e8e8"/>
 <path d="M26 -8 L71 -3 Q56 8.5 27 6 Z" fill="#777"/>
 <path d="M26 -9 L68 -3.5 Q55 7 27 5 Z" fill="url(#leaf)"/>
 <path d="M-8 24 L-3 86 Q17 64 11.5 26 Z" fill="#6e6e6e"/>
 <path d="M-8 24 L-3 81 Q13 61 9.5 26 Z" fill="#e8e8e8"/>
 <path d="M-8 26 L-3 71 Q8.5 56 6 27 Z" fill="#777"/>
 <path d="M-9 26 L-3.5 68 Q7 55 5 27 Z" fill="url(#leaf)"/>
 <!-- reeds (tapered) -->
 <g id="reed">
  <path d="M22 5.5 L66.5 20 A7 7 0 0 1 61.5 33.2 L19 13 Z" fill="#686868"/>
  <path d="M22 6.8 L66 21.2 A5.8 5.8 0 0 1 62 32 L20 12.4 Z" fill="#bdbdbd"/>
  <path d="M24 8.6 L65 23 A3.4 3.4 0 0 1 63 29.4 L24 11 Z" fill="#e6e6e6"/>
  <path d="M26 9.4 L64 23.8 A2 2 0 0 1 63 27.6 Z" fill="#f6f6f6"/>
 </g>
 <use href="#reed" transform="matrix(0 1 1 0 0 0)"/>
 <circle cx="77.5" cy="33" r="7.6" fill="url(#bead)"/>
 <circle cx="33" cy="76" r="7.6" fill="url(#bead)"/>
 <!-- big leaf -->
 <path d="M14 14 C25 10.5 65.5 22.5 71 71 C22.5 65.5 10.5 25 14 14 Z" fill="#585858"/>
 <path d="M15.500 15.500 C26 12.500 64 24 69.200 69.200 C24 64 12.500 26 15.500 15.500 Z" fill="#e6e6e6"/>
 <path d="M21 21 C29.500 19 58.500 28.500 63.500 63.500 C28.500 58.500 19 29.500 21 21 Z" fill="#545454"/>
 <path d="M22.500 22.500 C30.500 21 57 30 61.500 61.500 C30 57 21 30.500 22.500 22.500 Z" fill="url(#leaf)"/>
 <!-- disc and ring -->
 <circle cx="0" cy="0" r="30" fill="#5e5e5e"/>
 <circle cx="0" cy="0" r="29" fill="#dcdcdc"/>
 <circle cx="0" cy="0" r="27.6" fill="#f6f6f6"/>
 <circle cx="0" cy="0" r="24" fill="#e0e0e0"/>
 <circle cx="0" cy="0" r="22.8" fill="#6e6e6e"/>
 <circle cx="0" cy="0" r="21.8" fill="url(#dish)"/>
</g>
<g id="ros">
 <path d="M-24.5 0 L0 -25 L24.5 0 L0 25 Z" fill="#a2a2a2" fill-opacity=".7" filter="url(#b1)"/>
 <path d="M-19.5 0 L0 -20 L19.5 0 L0 20 Z" fill="#e2e272"/>
 <g fill="#56565a">
 <path d="M0 -19.5 L3 -15 L5.5 -14.5 L6 -11 L9 -10.5 L9.5 -7.5 L12.5 -7 L13 -4 L16 -3.5 L19 0 L16 3.5 L13 4 L12.5 7 L9.5 7.5 L9 10.5 L6 11 L5.5 14.5 L3 15 L0 19.5 L-3 15 L-5.5 14.5 L-6 11 L-9 10.5 L-9.5 7.5 L-12.5 7 L-13 4 L-16 3.5 L-19 0 L-16 -3.5 L-13 -4 L-12.5 -7 L-9.5 -7.5 L-9 -10.5 L-6 -11 L-5.5 -14.5 L-3 -15 Z"/></g>
 <g fill="#86868c"><path d="M0 -16 C3 -10 3 -5 0 -2 C-3 -5 -3 -10 0 -16Z"/><path d="M0 16 C3 10 3 5 0 2 C-3 5 -3 10 0 16Z"/><path d="M-16 0 C-10 3 -5 3 -2 0 C-5 -3 -10 -3 -16 0Z"/><path d="M16 0 C10 3 5 3 2 0 C5 -3 10 -3 16 0Z"/>
 <path d="M-8.5 -8.5 L-2 -4 L-4 -2Z M8.5 -8.5 L2 -4 L4 -2Z M-8.5 8.5 L-2 4 L-4 2Z M8.5 8.5 L2 4 L4 2Z" fill="#7a7a80"/></g>
 <path d="M-19.5 0 L0 -20 L19.5 0 L0 20 Z" fill="none" stroke="#3c3c34" stroke-width=".9" stroke-dasharray="1.5 1.7"/>
 <circle r="4.2" fill="#d8d8d8" filter="url(#b2)"/><circle r="2.8" fill="#fff"/>
</g>
<g id="dot"><circle r="11" fill="url(#halo)"/><circle r="4.4" cy=".4" fill="#555"/><circle r="3.9" fill="#fdfdfd"/></g>
</defs><rect x="370.5" y="127.5" width="627" height="523" fill="#ffff80" stroke="#000" stroke-width="1" shape-rendering="crispEdges"/><circle cx="474.5" cy="188.2" r="7.8" fill="url(#bead)"/><circle cx="527.7" cy="188.2" r="7.8" fill="url(#bead)"/><rect x="474.5" y="180.39999999999998" width="53.2" height="15.6" fill="url(#reelH)"/><circle cx="576.2" cy="188.2" r="7.8" fill="url(#bead)"/><circle cx="628.5" cy="188.2" r="7.8" fill="url(#bead)"/><rect x="576.2" y="180.39999999999998" width="52.3" height="15.6" fill="url(#reelH)"/><circle cx="677.3" cy="188.2" r="7.8" fill="url(#bead)"/><circle cx="691.3" cy="188.2" r="7.8" fill="url(#bead)"/><rect x="677.3" y="180.39999999999998" width="14.0" height="15.6" fill="url(#reelH)"/><circle cx="740.1" cy="188.2" r="7.8" fill="url(#bead)"/><circle cx="792.4" cy="188.2" r="7.8" fill="url(#bead)"/><rect x="740.1" y="180.39999999999998" width="52.3" height="15.6" fill="url(#reelH)"/><circle cx="840.9" cy="188.2" r="7.8" fill="url(#bead)"/><circle cx="894.1" cy="188.2" r="7.8" fill="url(#bead)"/><rect x="840.9" y="180.39999999999998" width="53.2" height="15.6" fill="url(#reelH)"/><circle cx="443.0" cy="188.2" r="7.6" fill="url(#bead)"/><circle cx="458.3" cy="188.2" r="7.6" fill="url(#bead)"/><circle cx="544.5" cy="188.2" r="7.6" fill="url(#bead)"/><circle cx="559.9" cy="188.2" r="7.6" fill="url(#bead)"/><circle cx="645.3" cy="188.2" r="7.6" fill="url(#bead)"/><circle cx="660.7" cy="188.2" r="7.6" fill="url(#bead)"/><circle cx="707.9" cy="188.2" r="7.6" fill="url(#bead)"/><circle cx="723.3" cy="188.2" r="7.6" fill="url(#bead)"/><circle cx="808.7" cy="188.2" r="7.6" fill="url(#bead)"/><circle cx="824.1" cy="188.2" r="7.6" fill="url(#bead)"/><circle cx="910.3" cy="188.2" r="7.6" fill="url(#bead)"/><circle cx="925.6" cy="188.2" r="7.6" fill="url(#bead)"/><circle cx="474.5" cy="588.8" r="7.8" fill="url(#bead)"/><circle cx="527.7" cy="588.8" r="7.8" fill="url(#bead)"/><rect x="474.5" y="581.0" width="53.2" height="15.6" fill="url(#reelH)"/><circle cx="576.2" cy="588.8" r="7.8" fill="url(#bead)"/><circle cx="628.5" cy="588.8" r="7.8" fill="url(#bead)"/><rect x="576.2" y="581.0" width="52.3" height="15.6" fill="url(#reelH)"/><circle cx="677.3" cy="588.8" r="7.8" fill="url(#bead)"/><circle cx="691.3" cy="588.8" r="7.8" fill="url(#bead)"/><rect x="677.3" y="581.0" width="14.0" height="15.6" fill="url(#reelH)"/><circle cx="740.1" cy="588.8" r="7.8" fill="url(#bead)"/><circle cx="792.4" cy="588.8" r="7.8" fill="url(#bead)"/><rect x="740.1" y="581.0" width="52.3" height="15.6" fill="url(#reelH)"/><circle cx="840.9" cy="588.8" r="7.8" fill="url(#bead)"/><circle cx="894.1" cy="588.8" r="7.8" fill="url(#bead)"/><rect x="840.9" y="581.0" width="53.2" height="15.6" fill="url(#reelH)"/><circle cx="443.0" cy="588.8" r="7.6" fill="url(#bead)"/><circle cx="458.3" cy="588.8" r="7.6" fill="url(#bead)"/><circle cx="544.5" cy="588.8" r="7.6" fill="url(#bead)"/><circle cx="559.9" cy="588.8" r="7.6" fill="url(#bead)"/><circle cx="645.3" cy="588.8" r="7.6" fill="url(#bead)"/><circle cx="660.7" cy="588.8" r="7.6" fill="url(#bead)"/><circle cx="707.9" cy="588.8" r="7.6" fill="url(#bead)"/><circle cx="723.3" cy="588.8" r="7.6" fill="url(#bead)"/><circle cx="808.7" cy="588.8" r="7.6" fill="url(#bead)"/><circle cx="824.1" cy="588.8" r="7.6" fill="url(#bead)"/><circle cx="910.3" cy="588.8" r="7.6" fill="url(#bead)"/><circle cx="925.6" cy="588.8" r="7.6" fill="url(#bead)"/><circle cx="432.8" cy="200.8" r="7.8" fill="url(#bead)"/><circle cx="432.8" cy="256.7" r="7.8" fill="url(#bead)"/><rect x="425.0" y="200.8" width="15.6" height="55.9" fill="url(#reelV)"/><circle cx="432.8" cy="306.3" r="7.8" fill="url(#bead)"/><circle cx="432.8" cy="362.7" r="7.8" fill="url(#bead)"/><rect x="425.0" y="306.3" width="15.6" height="56.4" fill="url(#reelV)"/><circle cx="432.8" cy="414.3" r="7.8" fill="url(#bead)"/><circle cx="432.8" cy="470.2" r="7.8" fill="url(#bead)"/><rect x="425.0" y="414.3" width="15.6" height="55.9" fill="url(#reelV)"/><circle cx="432.8" cy="520.3" r="7.8" fill="url(#bead)"/><circle cx="432.8" cy="576.2" r="7.8" fill="url(#bead)"/><rect x="425.0" y="520.3" width="15.6" height="55.9" fill="url(#reelV)"/><circle cx="432.8" cy="273.5" r="7.6" fill="url(#bead)"/><circle cx="432.8" cy="289" r="7.6" fill="url(#bead)"/><circle cx="432.8" cy="380.5" r="7.6" fill="url(#bead)"/><circle cx="432.8" cy="396" r="7.6" fill="url(#bead)"/><circle cx="432.8" cy="487.5" r="7.6" fill="url(#bead)"/><circle cx="432.8" cy="503" r="7.6" fill="url(#bead)"/><circle cx="935.8" cy="200.8" r="7.8" fill="url(#bead)"/><circle cx="935.8" cy="256.7" r="7.8" fill="url(#bead)"/><rect x="928.0" y="200.8" width="15.6" height="55.9" fill="url(#reelV)"/><circle cx="935.8" cy="306.3" r="7.8" fill="url(#bead)"/><circle cx="935.8" cy="362.7" r="7.8" fill="url(#bead)"/><rect x="928.0" y="306.3" width="15.6" height="56.4" fill="url(#reelV)"/><circle cx="935.8" cy="414.3" r="7.8" fill="url(#bead)"/><circle cx="935.8" cy="470.2" r="7.8" fill="url(#bead)"/><rect x="928.0" y="414.3" width="15.6" height="55.9" fill="url(#reelV)"/><circle cx="935.8" cy="520.3" r="7.8" fill="url(#bead)"/><circle cx="935.8" cy="576.2" r="7.8" fill="url(#bead)"/><rect x="928.0" y="520.3" width="15.6" height="55.9" fill="url(#reelV)"/><circle cx="935.8" cy="273.5" r="7.6" fill="url(#bead)"/><circle cx="935.8" cy="289" r="7.6" fill="url(#bead)"/><circle cx="935.8" cy="380.5" r="7.6" fill="url(#bead)"/><circle cx="935.8" cy="396" r="7.6" fill="url(#bead)"/><circle cx="935.8" cy="487.5" r="7.6" fill="url(#bead)"/><circle cx="935.8" cy="503" r="7.6" fill="url(#bead)"/><path d="M440.4 196.0 L928.2 196.0 L911.9000000000001 212.3 L456.7 212.3Z" fill="url(#frT)"/><path d="M440.4 581.0 L928.2 581.0 L911.9000000000001 564.7 L456.7 564.7Z" fill="url(#frB)"/><path d="M440.4 196.0 L440.4 581.0 L456.7 564.7 L456.7 212.3Z" fill="url(#frL)"/><path d="M928.2 196.0 L928.2 581.0 L911.9000000000001 564.7 L911.9000000000001 212.3Z" fill="url(#frR)"/><rect x="440.4" y="196.0" width="487.80000000000007" height="385.0" fill="none" stroke="#3c3c3c" stroke-width="1.2"/><rect x="456.7" y="212.3" width="455.20000000000005" height="352.4" fill="none" stroke="#4a4a4a" stroke-width="1"/><path d="M440.4 196.0 l16.3 16.3 M928.2 196.0 l-16.3 16.3 M440.4 581.0 l16.3 -16.3 M928.2 581.0 l-16.3 -16.3" stroke="#b8b8b8" stroke-width=".7" fill="none"/><use href="#corner" transform="translate(456.7 212.3)"/><use href="#corner" transform="translate(911.9000000000001 212.3) scale(-1 1)"/><use href="#corner" transform="translate(456.7 564.7) scale(1 -1)"/><use href="#corner" transform="translate(911.9000000000001 564.7) scale(-1 -1)"/><g fill="#646464" stroke="#646464" stroke-width="2.2" stroke-linejoin="round"><use href="#sprigD" transform="translate(761.9 301.0) rotate(10.7) scale(1.00 1.00)"/><use href="#sprigD" transform="translate(606.7 301.0) rotate(-10.7) scale(-1.00 1.00)"/><use href="#sprigD" transform="translate(761.9 475.0) rotate(169.3) scale(-1.00 1.00)"/><use href="#sprigD" transform="translate(606.7 475.0) rotate(190.7) scale(1.00 1.00)"/><use href="#sprigD" transform="translate(876.2 355.5) rotate(51.3) scale(0.90 0.90)"/><use href="#sprigD" transform="translate(492.4 355.5) rotate(-51.3) scale(-0.90 0.90)"/><use href="#sprigD" transform="translate(876.2 420.5) rotate(128.7) scale(-0.90 0.90)"/><use href="#sprigD" transform="translate(492.4 420.5) rotate(231.3) scale(0.90 0.90)"/></g><g fill="none" stroke="#646464" stroke-width="8.2" stroke-linecap="round"><use href="#arch" transform="translate(684.3 294.0) rotate(0.0) scale(1.00 1.00)"/><use href="#arch" transform="translate(684.3 482.0) rotate(180.0) scale(1.00 1.00)"/><use href="#arch" transform="translate(888.8 388.0) rotate(90.0) scale(0.72 1.00)"/><use href="#arch" transform="translate(479.8 388.0) rotate(-90.0) scale(0.72 1.00)"/><use href="#arch" transform="translate(727.7 296.1) rotate(5.7) scale(1.00 1.00)"/><use href="#arch" transform="translate(640.9 296.1) rotate(-5.7) scale(-1.00 1.00)"/><use href="#arch" transform="translate(727.7 479.9) rotate(174.3) scale(-1.00 1.00)"/><use href="#arch" transform="translate(640.9 479.9) rotate(185.7) scale(1.00 1.00)"/><use href="#arch" transform="translate(784.8 306.1) rotate(14.5) scale(0.95 0.95)"/><use href="#arch" transform="translate(583.8 306.1) rotate(-14.5) scale(-0.95 0.95)"/><use href="#arch" transform="translate(784.8 469.9) rotate(165.5) scale(-0.95 0.95)"/><use href="#arch" transform="translate(583.8 469.9) rotate(194.5) scale(0.95 0.95)"/><use href="#arch" transform="translate(822.7 318.8) rotate(22.9) scale(0.95 0.95)"/><use href="#arch" transform="translate(545.9 318.8) rotate(-22.9) scale(-0.95 0.95)"/><use href="#arch" transform="translate(822.7 457.2) rotate(157.1) scale(-0.95 0.95)"/><use href="#arch" transform="translate(545.9 457.2) rotate(202.9) scale(0.95 0.95)"/><use href="#arch" transform="translate(857.3 337.8) rotate(36.1) scale(0.90 0.90)"/><use href="#arch" transform="translate(511.3 337.8) rotate(-36.1) scale(-0.90 0.90)"/><use href="#arch" transform="translate(857.3 438.2) rotate(143.9) scale(-0.90 0.90)"/><use href="#arch" transform="translate(511.3 438.2) rotate(216.1) scale(0.90 0.90)"/><use href="#arch" transform="translate(884.2 368.2) rotate(64.9) scale(0.50 0.80)"/><use href="#arch" transform="translate(484.4 368.2) rotate(-64.9) scale(-0.50 0.80)"/><use href="#arch" transform="translate(884.2 407.8) rotate(115.1) scale(-0.50 0.80)"/><use href="#arch" transform="translate(484.4 407.8) rotate(244.9) scale(0.50 0.80)"/></g><g fill="#646464"><use href="#curl" transform="translate(684.3 294.0) rotate(0.0) scale(1.00 1.00)"/><use href="#curl" transform="translate(684.3 482.0) rotate(180.0) scale(1.00 1.00)"/><use href="#curl" transform="translate(888.8 388.0) rotate(90.0) scale(0.72 1.00)"/><use href="#curl" transform="translate(479.8 388.0) rotate(-90.0) scale(0.72 1.00)"/><use href="#curl" transform="translate(727.7 296.1) rotate(5.7) scale(1.00 1.00)"/><use href="#curl" transform="translate(640.9 296.1) rotate(-5.7) scale(-1.00 1.00)"/><use href="#curl" transform="translate(727.7 479.9) rotate(174.3) scale(-1.00 1.00)"/><use href="#curl" transform="translate(640.9 479.9) rotate(185.7) scale(1.00 1.00)"/><use href="#curl" transform="translate(784.8 306.1) rotate(14.5) scale(0.95 0.95)"/><use href="#curl" transform="translate(583.8 306.1) rotate(-14.5) scale(-0.95 0.95)"/><use href="#curl" transform="translate(784.8 469.9) rotate(165.5) scale(-0.95 0.95)"/><use href="#curl" transform="translate(583.8 469.9) rotate(194.5) scale(0.95 0.95)"/><use href="#curl" transform="translate(822.7 318.8) rotate(22.9) scale(0.95 0.95)"/><use href="#curl" transform="translate(545.9 318.8) rotate(-22.9) scale(-0.95 0.95)"/><use href="#curl" transform="translate(822.7 457.2) rotate(157.1) scale(-0.95 0.95)"/><use href="#curl" transform="translate(545.9 457.2) rotate(202.9) scale(0.95 0.95)"/><use href="#curl" transform="translate(857.3 337.8) rotate(36.1) scale(0.90 0.90)"/><use href="#curl" transform="translate(511.3 337.8) rotate(-36.1) scale(-0.90 0.90)"/><use href="#curl" transform="translate(857.3 438.2) rotate(143.9) scale(-0.90 0.90)"/><use href="#curl" transform="translate(511.3 438.2) rotate(216.1) scale(0.90 0.90)"/><use href="#curl" transform="translate(884.2 368.2) rotate(64.9) scale(0.50 0.80)"/><use href="#curl" transform="translate(484.4 368.2) rotate(-64.9) scale(-0.50 0.80)"/><use href="#curl" transform="translate(884.2 407.8) rotate(115.1) scale(-0.50 0.80)"/><use href="#curl" transform="translate(484.4 407.8) rotate(244.9) scale(0.50 0.80)"/></g><g fill="#cfcfcf"><use href="#sprigD" transform="translate(761.9 301.0) rotate(10.7) scale(1.00 1.00)"/><use href="#sprigD" transform="translate(606.7 301.0) rotate(-10.7) scale(-1.00 1.00)"/><use href="#sprigD" transform="translate(761.9 475.0) rotate(169.3) scale(-1.00 1.00)"/><use href="#sprigD" transform="translate(606.7 475.0) rotate(190.7) scale(1.00 1.00)"/><use href="#sprigD" transform="translate(876.2 355.5) rotate(51.3) scale(0.90 0.90)"/><use href="#sprigD" transform="translate(492.4 355.5) rotate(-51.3) scale(-0.90 0.90)"/><use href="#sprigD" transform="translate(876.2 420.5) rotate(128.7) scale(-0.90 0.90)"/><use href="#sprigD" transform="translate(492.4 420.5) rotate(231.3) scale(0.90 0.90)"/></g><g fill="none" stroke="#c2c2c2" stroke-width="6.2" stroke-linecap="round"><use href="#arch" transform="translate(684.3 294.0) rotate(0.0) scale(1.00 1.00)"/><use href="#arch" transform="translate(684.3 482.0) rotate(180.0) scale(1.00 1.00)"/><use href="#arch" transform="translate(888.8 388.0) rotate(90.0) scale(0.72 1.00)"/><use href="#arch" transform="translate(479.8 388.0) rotate(-90.0) scale(0.72 1.00)"/><use href="#arch" transform="translate(727.7 296.1) rotate(5.7) scale(1.00 1.00)"/><use href="#arch" transform="translate(640.9 296.1) rotate(-5.7) scale(-1.00 1.00)"/><use href="#arch" transform="translate(727.7 479.9) rotate(174.3) scale(-1.00 1.00)"/><use href="#arch" transform="translate(640.9 479.9) rotate(185.7) scale(1.00 1.00)"/><use href="#arch" transform="translate(784.8 306.1) rotate(14.5) scale(0.95 0.95)"/><use href="#arch" transform="translate(583.8 306.1) rotate(-14.5) scale(-0.95 0.95)"/><use href="#arch" transform="translate(784.8 469.9) rotate(165.5) scale(-0.95 0.95)"/><use href="#arch" transform="translate(583.8 469.9) rotate(194.5) scale(0.95 0.95)"/><use href="#arch" transform="translate(822.7 318.8) rotate(22.9) scale(0.95 0.95)"/><use href="#arch" transform="translate(545.9 318.8) rotate(-22.9) scale(-0.95 0.95)"/><use href="#arch" transform="translate(822.7 457.2) rotate(157.1) scale(-0.95 0.95)"/><use href="#arch" transform="translate(545.9 457.2) rotate(202.9) scale(0.95 0.95)"/><use href="#arch" transform="translate(857.3 337.8) rotate(36.1) scale(0.90 0.90)"/><use href="#arch" transform="translate(511.3 337.8) rotate(-36.1) scale(-0.90 0.90)"/><use href="#arch" transform="translate(857.3 438.2) rotate(143.9) scale(-0.90 0.90)"/><use href="#arch" transform="translate(511.3 438.2) rotate(216.1) scale(0.90 0.90)"/><use href="#arch" transform="translate(884.2 368.2) rotate(64.9) scale(0.50 0.80)"/><use href="#arch" transform="translate(484.4 368.2) rotate(-64.9) scale(-0.50 0.80)"/><use href="#arch" transform="translate(884.2 407.8) rotate(115.1) scale(-0.50 0.80)"/><use href="#arch" transform="translate(484.4 407.8) rotate(244.9) scale(0.50 0.80)"/></g><g fill="none" stroke="#e9e9e9" stroke-width="3" stroke-linecap="round"><use href="#arch" transform="translate(684.3 294.0) rotate(0.0) scale(1.00 1.00)"/><use href="#arch" transform="translate(684.3 482.0) rotate(180.0) scale(1.00 1.00)"/><use href="#arch" transform="translate(888.8 388.0) rotate(90.0) scale(0.72 1.00)"/><use href="#arch" transform="translate(479.8 388.0) rotate(-90.0) scale(0.72 1.00)"/><use href="#arch" transform="translate(727.7 296.1) rotate(5.7) scale(1.00 1.00)"/><use href="#arch" transform="translate(640.9 296.1) rotate(-5.7) scale(-1.00 1.00)"/><use href="#arch" transform="translate(727.7 479.9) rotate(174.3) scale(-1.00 1.00)"/><use href="#arch" transform="translate(640.9 479.9) rotate(185.7) scale(1.00 1.00)"/><use href="#arch" transform="translate(784.8 306.1) rotate(14.5) scale(0.95 0.95)"/><use href="#arch" transform="translate(583.8 306.1) rotate(-14.5) scale(-0.95 0.95)"/><use href="#arch" transform="translate(784.8 469.9) rotate(165.5) scale(-0.95 0.95)"/><use href="#arch" transform="translate(583.8 469.9) rotate(194.5) scale(0.95 0.95)"/><use href="#arch" transform="translate(822.7 318.8) rotate(22.9) scale(0.95 0.95)"/><use href="#arch" transform="translate(545.9 318.8) rotate(-22.9) scale(-0.95 0.95)"/><use href="#arch" transform="translate(822.7 457.2) rotate(157.1) scale(-0.95 0.95)"/><use href="#arch" transform="translate(545.9 457.2) rotate(202.9) scale(0.95 0.95)"/><use href="#arch" transform="translate(857.3 337.8) rotate(36.1) scale(0.90 0.90)"/><use href="#arch" transform="translate(511.3 337.8) rotate(-36.1) scale(-0.90 0.90)"/><use href="#arch" transform="translate(857.3 438.2) rotate(143.9) scale(-0.90 0.90)"/><use href="#arch" transform="translate(511.3 438.2) rotate(216.1) scale(0.90 0.90)"/><use href="#arch" transform="translate(884.2 368.2) rotate(64.9) scale(0.50 0.80)"/><use href="#arch" transform="translate(484.4 368.2) rotate(-64.9) scale(-0.50 0.80)"/><use href="#arch" transform="translate(884.2 407.8) rotate(115.1) scale(-0.50 0.80)"/><use href="#arch" transform="translate(484.4 407.8) rotate(244.9) scale(0.50 0.80)"/></g><g fill="#e6e6e6"><use href="#curl" transform="translate(684.3 294.0) rotate(0.0) scale(1.00 1.00)"/><use href="#curl" transform="translate(684.3 482.0) rotate(180.0) scale(1.00 1.00)"/><use href="#curl" transform="translate(888.8 388.0) rotate(90.0) scale(0.72 1.00)"/><use href="#curl" transform="translate(479.8 388.0) rotate(-90.0) scale(0.72 1.00)"/><use href="#curl" transform="translate(727.7 296.1) rotate(5.7) scale(1.00 1.00)"/><use href="#curl" transform="translate(640.9 296.1) rotate(-5.7) scale(-1.00 1.00)"/><use href="#curl" transform="translate(727.7 479.9) rotate(174.3) scale(-1.00 1.00)"/><use href="#curl" transform="translate(640.9 479.9) rotate(185.7) scale(1.00 1.00)"/><use href="#curl" transform="translate(784.8 306.1) rotate(14.5) scale(0.95 0.95)"/><use href="#curl" transform="translate(583.8 306.1) rotate(-14.5) scale(-0.95 0.95)"/><use href="#curl" transform="translate(784.8 469.9) rotate(165.5) scale(-0.95 0.95)"/><use href="#curl" transform="translate(583.8 469.9) rotate(194.5) scale(0.95 0.95)"/><use href="#curl" transform="translate(822.7 318.8) rotate(22.9) scale(0.95 0.95)"/><use href="#curl" transform="translate(545.9 318.8) rotate(-22.9) scale(-0.95 0.95)"/><use href="#curl" transform="translate(822.7 457.2) rotate(157.1) scale(-0.95 0.95)"/><use href="#curl" transform="translate(545.9 457.2) rotate(202.9) scale(0.95 0.95)"/><use href="#curl" transform="translate(857.3 337.8) rotate(36.1) scale(0.90 0.90)"/><use href="#curl" transform="translate(511.3 337.8) rotate(-36.1) scale(-0.90 0.90)"/><use href="#curl" transform="translate(857.3 438.2) rotate(143.9) scale(-0.90 0.90)"/><use href="#curl" transform="translate(511.3 438.2) rotate(216.1) scale(0.90 0.90)"/><use href="#curl" transform="translate(884.2 368.2) rotate(64.9) scale(0.50 0.80)"/><use href="#curl" transform="translate(484.4 368.2) rotate(-64.9) scale(-0.50 0.80)"/><use href="#curl" transform="translate(884.2 407.8) rotate(115.1) scale(-0.50 0.80)"/><use href="#curl" transform="translate(484.4 407.8) rotate(244.9) scale(0.50 0.80)"/></g><g fill="#f8f8f8"><use href="#curl" transform="translate(684.3 294.0) rotate(0.0) scale(1.00 1.00)"/><use href="#curl" transform="translate(684.3 482.0) rotate(180.0) scale(1.00 1.00)"/><use href="#curl" transform="translate(888.8 388.0) rotate(90.0) scale(0.72 1.00)"/><use href="#curl" transform="translate(479.8 388.0) rotate(-90.0) scale(0.72 1.00)"/><use href="#curl" transform="translate(727.7 296.1) rotate(5.7) scale(1.00 1.00)"/><use href="#curl" transform="translate(640.9 296.1) rotate(-5.7) scale(-1.00 1.00)"/><use href="#curl" transform="translate(727.7 479.9) rotate(174.3) scale(-1.00 1.00)"/><use href="#curl" transform="translate(640.9 479.9) rotate(185.7) scale(1.00 1.00)"/><use href="#curl" transform="translate(784.8 306.1) rotate(14.5) scale(0.95 0.95)"/><use href="#curl" transform="translate(583.8 306.1) rotate(-14.5) scale(-0.95 0.95)"/><use href="#curl" transform="translate(784.8 469.9) rotate(165.5) scale(-0.95 0.95)"/><use href="#curl" transform="translate(583.8 469.9) rotate(194.5) scale(0.95 0.95)"/><use href="#curl" transform="translate(822.7 318.8) rotate(22.9) scale(0.95 0.95)"/><use href="#curl" transform="translate(545.9 318.8) rotate(-22.9) scale(-0.95 0.95)"/><use href="#curl" transform="translate(822.7 457.2) rotate(157.1) scale(-0.95 0.95)"/><use href="#curl" transform="translate(545.9 457.2) rotate(202.9) scale(0.95 0.95)"/><use href="#curl" transform="translate(857.3 337.8) rotate(36.1) scale(0.90 0.90)"/><use href="#curl" transform="translate(511.3 337.8) rotate(-36.1) scale(-0.90 0.90)"/><use href="#curl" transform="translate(857.3 438.2) rotate(143.9) scale(-0.90 0.90)"/><use href="#curl" transform="translate(511.3 438.2) rotate(216.1) scale(0.90 0.90)"/><use href="#curl" transform="translate(884.2 368.2) rotate(64.9) scale(0.50 0.80)"/><use href="#curl" transform="translate(484.4 368.2) rotate(-64.9) scale(-0.50 0.80)"/><use href="#curl" transform="translate(884.2 407.8) rotate(115.1) scale(-0.50 0.80)"/><use href="#curl" transform="translate(484.4 407.8) rotate(244.9) scale(0.50 0.80)"/></g><ellipse cx="684.3" cy="388.0" rx="203.5" ry="93" fill="#5e5e5e"/><ellipse cx="684.3" cy="388.0" rx="202.6" ry="92.1" fill="#cacaca"/><ellipse cx="684.3" cy="387.4" rx="201" ry="90.3" fill="#ebebeb"/><ellipse cx="684.3" cy="387.7" rx="198.8" ry="88.2" fill="#f7f7f7"/><ellipse cx="684.3" cy="388.0" rx="196.6" ry="86" fill="#c4c4c4"/><ellipse cx="684.3" cy="388.0" rx="195.4" ry="84.8" fill="#5a5a5a"/><ellipse cx="684.3" cy="388.0" rx="195" ry="84.5" fill="url(#dome)"/><g clip-path="url(#ovc)"><path d="M-11.3 236.0 L335.9 540.0 M-11.3 540.0 L335.9 236.0 M75.7 236.0 L422.9 540.0 M75.7 540.0 L422.9 236.0 M162.7 236.0 L509.9 540.0 M162.7 540.0 L509.9 236.0 M249.7 236.0 L596.9 540.0 M249.7 540.0 L596.9 236.0 M336.7 236.0 L683.9 540.0 M336.7 540.0 L683.9 236.0 M423.7 236.0 L770.9 540.0 M423.7 540.0 L770.9 236.0 M510.7 236.0 L857.9 540.0 M510.7 540.0 L857.9 236.0 M597.7 236.0 L944.9 540.0 M597.7 540.0 L944.9 236.0 M684.7 236.0 L1031.9 540.0 M684.7 540.0 L1031.9 236.0 M771.7 236.0 L1118.9 540.0 M771.7 540.0 L1118.9 236.0 M858.7 236.0 L1205.9 540.0 M858.7 540.0 L1205.9 236.0 M945.7 236.0 L1292.9 540.0 M945.7 540.0 L1292.9 236.0 M1032.7 236.0 L1379.9 540.0 M1032.7 540.0 L1379.9 236.0" stroke="#cecece" stroke-opacity=".62" stroke-width="4.4" fill="none" filter="url(#b1)"/><ellipse cx="684.3" cy="388.0" rx="198" ry="87.5" fill="none" stroke="#4c4c4c" stroke-width="15" filter="url(#b5)"/><ellipse cx="684.3" cy="388.0" rx="196" ry="85.5" fill="none" stroke="#4c4c4c" stroke-width="4" filter="url(#b1)" opacity=".6"/><use href="#ros" x="597.5" y="388"/><use href="#ros" x="684.5" y="388"/><use href="#ros" x="771.5" y="388"/><use href="#dot" x="518" y="388"/><use href="#dot" x="851.3" y="388"/><use href="#dot" x="643.8" y="350"/><use href="#dot" x="724.8" y="350"/><use href="#dot" x="643.8" y="426"/><use href="#dot" x="724.8" y="426"/></g></svg>
<div class="a" style="left:1072px;top:95px;width:17px;height:587px;background:#f0f0f0"></div>
<div class="a" style="left:1072px;top:112px;width:15px;height:555px;background:#c4c4c4"></div>
<svg class="a" style="left:1074px;top:99px" width="12" height="8" viewBox="0 0 12 8" fill="none" stroke="#5a5a5a" stroke-width="2"><path d="M2.300 6.500 L5.600 2.800 L8.900 6.500"/></svg>
<svg class="a" style="left:1074px;top:672px" width="12" height="8" viewBox="0 0 12 8" fill="none" stroke="#5a5a5a" stroke-width="2"><path d="M2.300 1.800 L5.600 5.500 L8.900 1.800"/></svg>
<div class="a" style="left:277px;top:682px;width:812px;height:25px;background:#f0f0f0"></div>
<div class="a" style="left:315px;top:686px;width:739px;height:15px;background:#cbcbcb"></div>
<svg class="a" style="left:301px;top:687px" width="9" height="12" viewBox="0 0 9 12" fill="none" stroke="#5a5a5a" stroke-width="2"><path d="M7 3 L3.300 6.300 L7 9.600"/></svg>
<svg class="a" style="left:1058px;top:687px" width="9" height="12" viewBox="0 0 9 12" fill="none" stroke="#5a5a5a" stroke-width="2"><path d="M2.500 3 L6.200 6.300 L2.500 9.600"/></svg>
<div class="a" style="left:277px;top:684px;width:21px;height:18px;background:#f0f0f0;border:1px solid;border-color:#8a8a8a #5a5a5a #5a5a5a #8a8a8a;box-shadow:inset -1px -1px 0 #8a8a8a"></div>
<div class="a" style="left:287px;top:689px;width:0;height:0;border:4px solid transparent;border-right:0;border-left:4.5px solid #000"></div>
<div class="a" style="left:284px;top:689px;width:1.3px;height:3px;background:#000"></div><div class="a" style="left:284px;top:694px;width:1.3px;height:3px;background:#000"></div>
<div class="a" style="left:277px;top:706px;width:812px;height:1px;background:#a4a4a4"></div>
<div class="a" style="left:278px;top:707px;width:811px;height:1px;background:#fafafa"></div>
<div class="a" style="left:277px;top:706px;width:1px;height:41px;background:#8e8e8e"></div>
<div class="a" style="left:274px;top:746px;width:820px;height:1px;background:#d2d2d2"></div>
<div class="a" style="left:274px;top:747px;width:820px;height:1px;background:#fcfcfc"></div>
<div class="a" style="left:298px;top:723px;width:25px;height:20px;background:#000;box-shadow:1px 1px 0 #888"></div>
<div class="a" style="left:283px;top:711px;width:25px;height:20px;background:#fff;border:1px solid #333;box-shadow:1px 1px 0 #888"></div>
<svg class="a" style="left:311px;top:712px" width="12" height="10" viewBox="0 0 12 10" fill="none" stroke="#222" stroke-width="1.1"><ellipse cx="4" cy="3.5" rx="3.3" ry="2.8"/><ellipse cx="7.5" cy="6" rx="3.6" ry="3"/></svg>
<div class="sw" style="left:333px;background:#ffffff"></div>
<div class="sw" style="left:368px;background:#000000"></div>
<div class="sw" style="left:403px;background:#00ffff"></div>
<div class="sw" style="left:438px;background:#2f45d6"></div>
<div class="sw" style="left:473px;background:#56b94e"></div>
<div class="sw" style="left:508px;background:#d8132a"></div>
<div class="sw" style="left:543px;background:#a62fdc"></div>
<div class="sw" style="left:578px;background:#ffff80"></div>
<div class="sw" style="left:613px;background:#a89a39"></div>
<div class="sw" style="left:648px;background:linear-gradient(90deg,#f6b818,#fcd01c)"></div>
<div class="sw" style="left:683px;background:#050505"></div>
<div class="sw" style="left:718px;background:#050505"></div>
<div class="sw" style="left:753px;background:#050505"></div>
<div class="sw" style="left:788px;background:#050505"></div>
<div class="sw" style="left:823px;background:#050505"></div>
<div class="sw" style="left:858px;background:#050505"></div>
<div class="sw" style="left:893px;background:#050505"></div>
<div class="sw" style="left:928px;background:#050505"></div>
<div class="sw" style="left:963px;background:#050505"></div>
<div class="sw" style="left:998px;background:#050505"></div>
<div class="sw" style="left:1033px;background:#050505"></div>
<svg class="a" style="left:1073px;top:712px" width="12" height="8" viewBox="0 0 12 8" fill="none" stroke="#4a4a4a" stroke-width="2"><path d="M2.300 6.500 L6 2.800 L9.700 6.500"/></svg>
<svg class="a" style="left:1073px;top:734px" width="12" height="8" viewBox="0 0 12 8" fill="none" stroke="#4a4a4a" stroke-width="2"><path d="M2.300 1.800 L6 5.500 L9.700 1.800"/></svg>
<div class="a" style="left:1089px;top:44px;width:1px;height:703px;background:#fdfdfd"></div>
<div class="a" style="left:1093px;top:44px;width:1px;height:703px;background:#9a9a9a"></div>
<div class="bh" style="top:45.4px"><div class="bb"><i class="d"></i></div></div>
<div class="t" style="left:1106px;top:47px;font-size:12px;font-weight:bold;color:#fff">Vectors</div>
<div class="bh" style="top:76.5px"><div class="bb"><i class="d"></i></div></div>
<div class="t" style="left:1106px;top:78px;font-size:12px;font-weight:bold;color:#fff">Bitmaps</div>
<div class="bh" style="top:107.3px"><div class="bb"><i class="u"></i></div></div>
<div class="t" style="left:1106px;top:109px;font-size:12px;font-weight:bold;color:#fff">Reliefs</div>
<div class="a" style="left:1103px;top:123px;width:239px;height:22px;background:#fff;border:1px solid;border-color:#6a6a6a #e8e8e8 #e8e8e8 #6a6a6a;box-shadow:inset 1px 1px 0 #a0a0a0"></div>
<div class="a" style="left:1325px;top:125px;width:16px;height:19px;background:#f0f0f0;border:1px solid;border-color:#fff #6a6a6a #6a6a6a #fff"></div>
<div class="a" style="left:1329px;top:133px;width:0;height:0;border:4px solid transparent;border-bottom:0;border-top:4px solid #000"></div>
<div class="t" style="left:1105px;top:127px;font-size:12px">Front Relief</div>
<div class="a" style="left:1102px;top:174px;width:243px;height:25px;background:#d6d6d6"></div>
<div class="a" style="left:1138px;top:183px;width:0;height:0;border:4px solid transparent;border-right:0;border-left:5px solid #000"></div>
<div class="t" style="left:1149px;top:182px;font-size:12px">Relief Layer 1</div>
<svg class="a" style="left:1102px;top:151px" width="18" height="20" viewBox="0 0 18 20" ><path d="M8 17 L16 11 V15 L10 19Z" fill="#b4b4b4"/><path d="M2 2 H8 L12 6 V18 H2Z" fill="#9fb2d2"/><path d="M2 2 H4 V18 H2Z" fill="#d2dcec"/><path d="M8 2 L12 6 H8Z" fill="#eef2f8"/></svg>
<svg class="a" style="left:1128px;top:151px" width="22" height="20" viewBox="0 0 22 20" ><path d="M8 15 L20 11 L19 14 L10 18Z" fill="#b8b8b8"/><path d="M2 6 L6 2 L10 2 L12 4 L16 4 L16 9 L3 15Z" fill="#f2de12"/><path d="M3 10 C8 8 14 8 20 7 L17 15 C12 15 8 16 4 18Z" fill="#e4c90c"/></svg>
<svg class="a" style="left:1155px;top:152px" width="20" height="20" viewBox="0 0 20 20" ><path d="M14 15 L19 11 V14 L16 17Z" fill="#b8b8b8"/><path d="M2 2 H16 V17 H4 L2 15Z" fill="#1a4ab8"/><rect x="4.500" y="2" width="9" height="6.500" fill="#d2d8de"/><rect x="5.500" y="11.500" width="8" height="5.500" fill="#b8bec6"/><rect x="7" y="12.500" width="2.500" height="3.800" fill="#1a4ab8"/></svg>
<svg class="a" style="left:1182px;top:151px" width="22" height="21" viewBox="0 0 22 21" ><path d="M10 17 L20 13 V16 L12 20Z" fill="#c0c0c0"/><path d="M3 2 H11 L13 4 L12 6 L14 8 L12 10 L14 12 L12 14 L13 17 H3 L4 14 L2 12 L4 9 L2 7 L4 5Z" fill="#a8865a"/><path d="M8 6 H16 L18 8 L17 10 L19 12 L17 15 L18 19 H8 L9 16 L7 13 L9 11 L7 9Z" fill="#c2a27a"/></svg>
<svg class="a" style="left:1210px;top:151px" width="22" height="22" viewBox="0 0 22 22" ><path d="M2 15 L11 11 L20 15 L11 19.500Z" fill="#b01818"/><path d="M2 15 L11 19.500 V21 L2 16.500Z" fill="#6a0c0c"/><path d="M20 15 L11 19.500 V21 L20 16.500Z" fill="#8a1010"/><path d="M3 7 L11 3 L19 7 L11 11Z" fill="#7a86e0"/><path d="M3 7 L11 11 V12.500 L3 8.500Z" fill="#4a54b0"/><path d="M19 7 L11 11 V12.500 L19 8.500Z" fill="#5a66c4"/><path d="M11 10 V15 M8.500 13 L11 16 L13.500 13" stroke="#f0c020" stroke-width="1.800" fill="none"/></svg>
<svg class="a" style="left:1239px;top:151px" width="20" height="22" viewBox="0 0 20 22" ><rect x="3" y="2" width="12" height="18" fill="#9aaed0"/><rect x="3" y="2" width="2" height="18" fill="#d0daea"/><circle cx="10" cy="10" r="4.500" fill="#f6d64a"/><circle cx="9" cy="8.500" r="1.800" fill="#fff6c0"/><rect x="8" y="14" width="4" height="3.500" fill="#8a6a20"/></svg>
<svg class="a" style="left:1268px;top:151px" width="20" height="22" viewBox="0 0 20 22" ><rect x="1" y="2" width="17" height="18" fill="#050505"/><circle cx="6" cy="6.500" r="1.800" fill="#b0b0b0"/><circle cx="12.500" cy="6.500" r="1.800" fill="#b0b0b0"/><circle cx="9.300" cy="8.500" r="3.300" fill="#c8c8c8"/><ellipse cx="9.300" cy="14.500" rx="5" ry="4.400" fill="#b8b8b8"/><ellipse cx="9.300" cy="15" rx="2.500" ry="2.200" fill="#888"/><path d="M14 8 h3 M15.500 8 v3.500" stroke="#e8e8e8" stroke-width="1"/><path d="M2.500 9 v6" stroke="#ddd" stroke-width="1"/></svg>
<svg class="a" style="left:1296px;top:152px" width="16" height="20" viewBox="0 0 16 20" ><ellipse cx="8" cy="17.500" rx="5.500" ry="1.800" fill="#c0c0c0"/><path d="M2.500 5 L4 17 C6 18.500 10 18.500 12 17 L13.500 5Z" fill="#4a8ae0"/><path d="M4 6 L5.200 16.500 C6 17 7 17.300 7.500 17.300 L7 6Z" fill="#8ab8f2"/><ellipse cx="8" cy="5" rx="5.600" ry="1.900" fill="#b8d4f6" stroke="#3a6ab8" stroke-width=".7"/></svg>
<svg class="a" style="left:1322px;top:150px" width="20" height="24" viewBox="0 0 20 24" ><rect x=".5" y="1.500" width="17" height="20" fill="#f4f0dc" stroke="#c8c4a8" stroke-width=".8"/><circle cx="6.500" cy="10" r="4.600" fill="#e0a818"/><circle cx="5.500" cy="8.500" r="1.800" fill="#fbe48a"/><rect x="4.500" y="14.500" width="4" height="4.500" fill="#5a4210"/><circle cx="13" cy="7.500" r="4.600" fill="#f2c020"/><circle cx="12" cy="6" r="1.800" fill="#fff2b0"/><rect x="11" y="12" width="4" height="4.500" fill="#5a4210"/></svg>
<svg class="a" style="left:1110px;top:177px" width="24" height="22" viewBox="0 0 24 22" ><path d="M3 15 C3 5 12 3 17 5 C21 7 23 11 22 14 L17 14 C17 11 14 9 11 10 C8 11 7 13 7 15Z" fill="#c8a84a"/><path d="M3 15 C3 7 9 4 14 4.500 C9 6 6 10 7 15Z" fill="#e8d48a"/><path d="M3 15 C3 10 5 8 7 7 L7 15Z" fill="#7a86d0"/><path d="M7 15 C7 13 8 11 11 10 C14 9 17 11 17 14 L13 14Z" fill="#9aa4e0" opacity=".7"/><path d="M2 18.500 H8 M5 15.500 V21.500" stroke="#000" stroke-width="1.100"/></svg>
<div class="a" style="left:1323px;top:178px;width:18px;height:18px;background:#f0ecd8;border:1px solid;border-color:#fff #aaa #aaa #fff"></div>
<svg class="a" style="left:1325px;top:179px" width="14" height="17" viewBox="0 0 14 17" ><circle cx="7" cy="6" r="4.800" fill="#f2c41c"/><circle cx="5.800" cy="4.500" r="1.900" fill="#fff4b8"/><rect x="5" y="10.500" width="4" height="4.500" fill="#4a3608"/></svg>
<svg class="a" style="left:1312px;top:203px" width="12" height="12" viewBox="0 0 12 12" ><rect width="12" height="12" rx="1" fill="#1a3a9a"/><rect x=".5" y=".5" width="11" height="11" rx="1" fill="none" stroke="#0c2470"/><path d="M6 2.500 L2.500 6 M6 2.500 L9.500 6 M6 2.500 V10" stroke="#fff" stroke-width="1.800" fill="none"/></svg>
<svg class="a" style="left:1330px;top:203px" width="12" height="12" viewBox="0 0 12 12" ><rect width="12" height="12" rx="1" fill="#1a3a9a"/><rect x=".5" y=".5" width="11" height="11" rx="1" fill="none" stroke="#0c2470"/><path d="M6 9.500 L2.500 6 M6 9.500 L9.500 6 M6 9.500 V2" stroke="#fff" stroke-width="1.800" fill="none"/></svg>
<svg class="a" style="left:1094px;top:722px" width="272" height="24"><rect width="272" height="24" fill="#cfcfcf" filter="url(#noise)"/></svg><div class="a" style="left:1192px;top:721px;width:174px;height:1px;background:#9c9c9c"></div>
<div class="a" style="left:1094px;top:746px;width:272px;height:1px;background:#7a7a7a"></div>
<div class="a" style="left:1094px;top:721px;width:50px;height:25px;background:#f0f0f0;border-radius:0 0 5px 0"></div>
<div class="a" style="left:1143px;top:722px;width:49px;height:24px;background:#f8f8f8;border:1px solid #9a9a9a;border-top:1px solid #e8e8e8;border-left:1px solid #d0d0d0;border-radius:0 0 4px 4px"></div>
<div class="t" style="left:1103px;top:727px;font-size:11.5px;letter-spacing:-0.4px">Layers</div>
<div class="t" style="left:1151px;top:728px;font-size:12px;letter-spacing:-0.1px">Add In</div>
<div class="a" style="left:1023px;top:750px;width:65px;height:18px;border:1px solid;border-color:#a0a0a0 #fff #fff #a0a0a0"></div>
<div class="a" style="left:1091px;top:750px;width:67px;height:18px;border:1px solid;border-color:#a0a0a0 #fff #fff #a0a0a0"></div>
<div class="a" style="left:1161px;top:750px;width:60px;height:18px;border:1px solid;border-color:#a0a0a0 #fff #fff #a0a0a0"></div>
<div class="a" style="left:1224px;top:750px;width:70px;height:18px;border:1px solid;border-color:#a0a0a0 #fff #fff #a0a0a0"></div>
<div class="a" style="left:1297px;top:750px;width:69px;height:18px;border:1px solid;border-color:#a0a0a0 #fff #fff #a0a0a0"></div>
<div class="t" style="left:1026px;top:754px;font-size:11.5px;letter-spacing:-0.42px">X: 367.914</div>
<div class="t" style="left:1094px;top:754px;font-size:11.5px;letter-spacing:-0.35px">Y: -200.301</div>
</body></html>
